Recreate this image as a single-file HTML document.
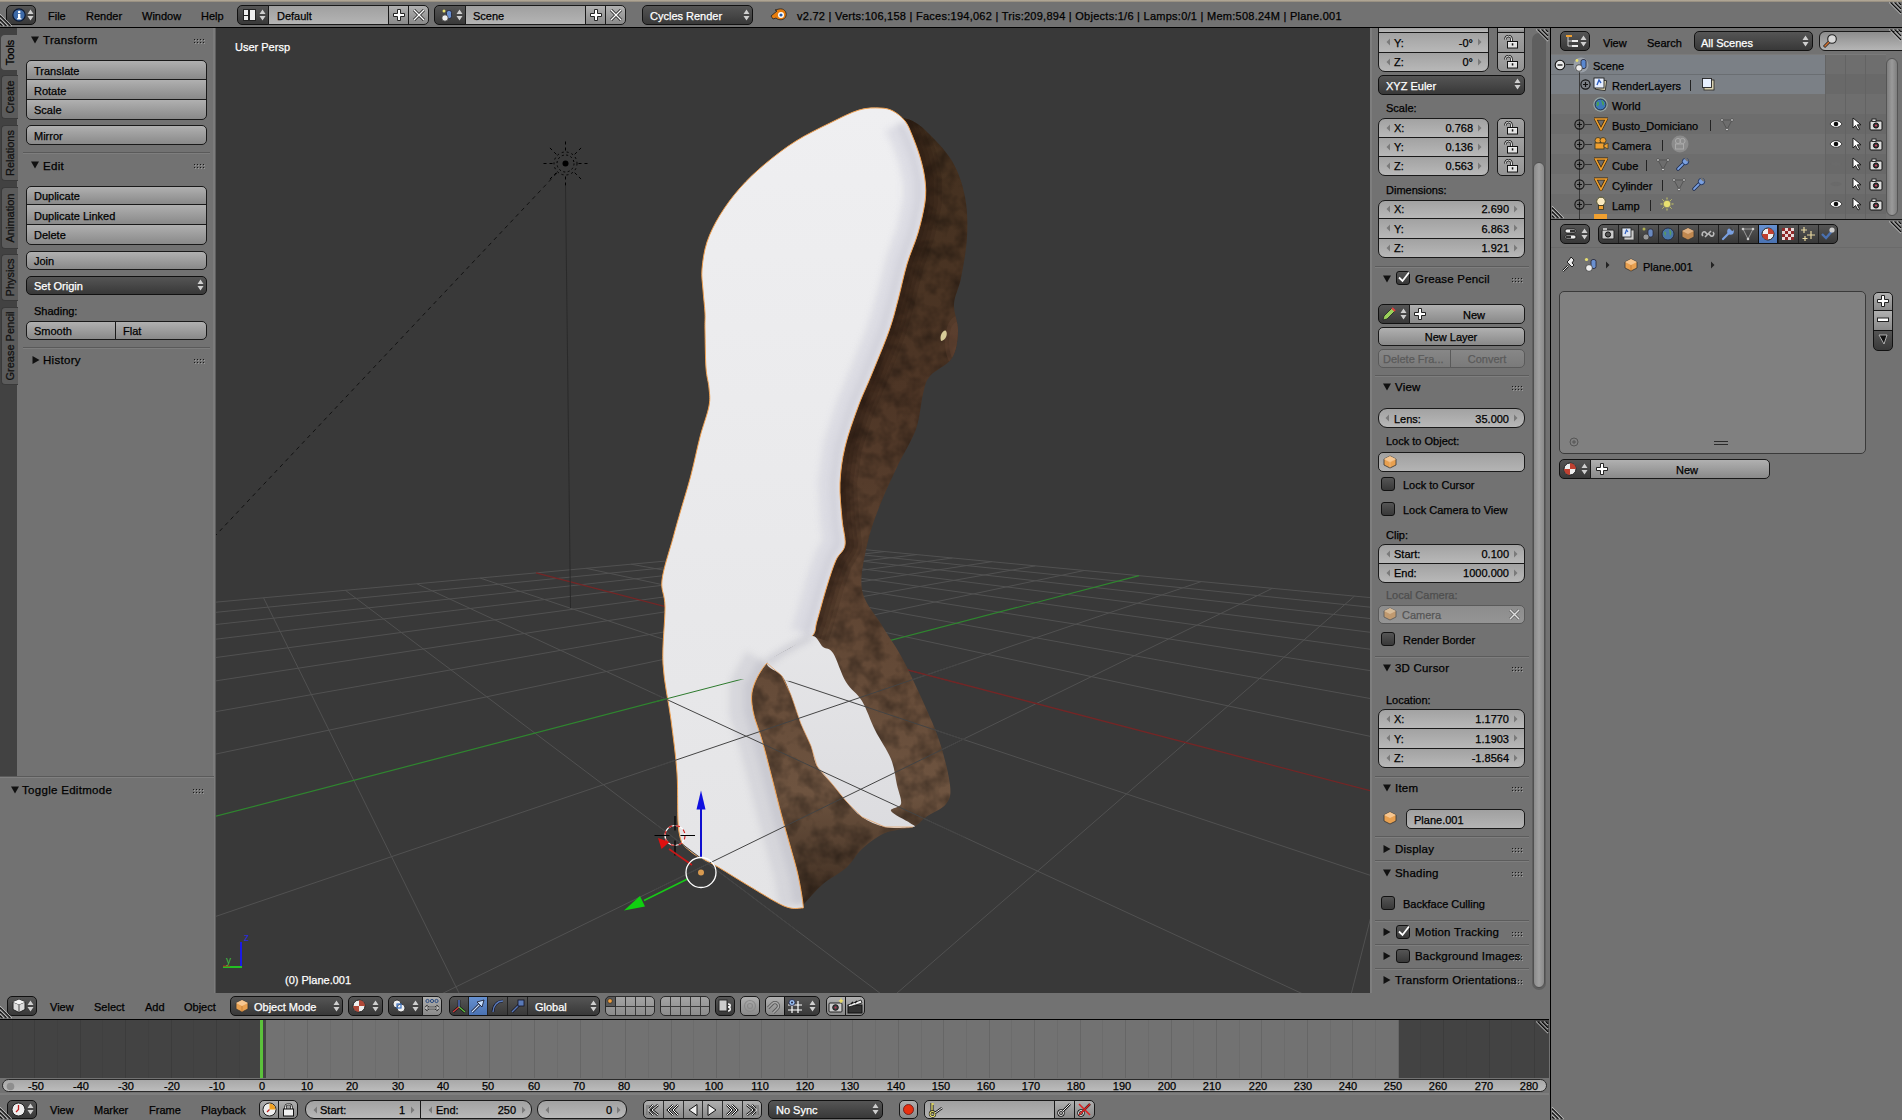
<!DOCTYPE html><html><head><meta charset="utf-8"><style>html,body{margin:0;padding:0;width:1902px;height:1120px;overflow:hidden;background:#727272}div{position:absolute}.t{font-family:"Liberation Sans",sans-serif;font-size:11px;line-height:12px;white-space:pre;-webkit-text-stroke:0.25px currentColor}</style></head><body><div style="left:0px;top:0px;width:1902px;height:27px;background:#727272;"></div><div style="left:0px;top:0px;width:1902px;height:2px;background:linear-gradient(#b9ae9c,#8f877a);"></div><div style="left:0px;top:27px;width:1902px;height:1px;background:#000;"></div><div style="left:6px;top:5px;width:30px;height:20px;box-sizing:border-box;border:1px solid #111;border-radius:5px 5px 5px 5px;background:linear-gradient(#555555,#383838);"></div><svg style="position:absolute;left:12px;top:8px;" width="14" height="14" viewBox="0 0 14 14"><circle cx="7" cy="7" r="6.2" fill="#3d6aa8" stroke="#0c1830" stroke-width="1.2"/><rect x="6" y="6" width="2.4" height="5" fill="#fff"/><rect x="5" y="10.2" width="4.4" height="1.2" fill="#fff"/><circle cx="7.2" cy="4" r="1.3" fill="#fff"/></svg><svg style="position:absolute;left:27px;top:9px;" width="7" height="12" viewBox="0 0 7 12"><path d="M0.5 5 L3.5 0.5 L6.5 5 Z M0.5 7 L3.5 11.5 L6.5 7 Z" fill="#cfcfcf"/></svg><div class="t" style="left:48px;top:10px;color:#000;font-size:11px;">File</div><div class="t" style="left:86px;top:10px;color:#000;font-size:11px;">Render</div><div class="t" style="left:142px;top:10px;color:#000;font-size:11px;">Window</div><div class="t" style="left:201px;top:10px;color:#000;font-size:11px;">Help</div><div style="left:237px;top:5px;width:32px;height:20px;box-sizing:border-box;border:1px solid #111;border-radius:5px 0px 0px 5px;background:linear-gradient(#555555,#383838);"></div><svg style="position:absolute;left:243px;top:9px;" width="13" height="12" viewBox="0 0 13 12"><rect x="0.5" y="0.5" width="5" height="11" fill="#eee" stroke="#222"/><rect x="6.5" y="0.5" width="6" height="11" fill="#eee" stroke="#222"/><rect x="0.5" y="6" width="5" height="1" fill="#222"/></svg><svg style="position:absolute;left:259px;top:9px;" width="7" height="12" viewBox="0 0 7 12"><path d="M0.5 5 L3.5 0.5 L6.5 5 Z M0.5 7 L3.5 11.5 L6.5 7 Z" fill="#cfcfcf"/></svg><div style="left:268px;top:5px;width:121px;height:20px;box-sizing:border-box;border:1px solid #191919;border-radius:0px 0px 0px 0px;background:linear-gradient(#a0a0a0,#b4b4b4);"></div><div class="t" style="left:277px;top:10px;color:#000;font-size:11px;">Default</div><div style="left:388px;top:5px;width:21px;height:20px;box-sizing:border-box;border:1px solid #191919;border-radius:0px 0px 0px 0px;background:linear-gradient(#b0b0b0,#898989);"></div><svg style="position:absolute;left:393px;top:9px;" width="12" height="12" viewBox="0 0 12 12"><path d="M4.5 0.5h3v4h4v3h-4v4h-3v-4h-4v-3h4z" fill="#fff" stroke="#222" stroke-width="1"/></svg><div style="left:408px;top:5px;width:21px;height:20px;box-sizing:border-box;border:1px solid #191919;border-radius:0px 5px 5px 0px;background:linear-gradient(#b0b0b0,#898989);"></div><svg style="position:absolute;left:413px;top:9px;" width="12" height="12" viewBox="0 0 12 12"><path d="M1 1 L11 11 M11 1 L1 11" stroke="#222" stroke-width="3"/><path d="M1 1 L11 11 M11 1 L1 11" stroke="#fff" stroke-width="1.4"/></svg><div style="left:434px;top:5px;width:32px;height:20px;box-sizing:border-box;border:1px solid #111;border-radius:5px 0px 0px 5px;background:linear-gradient(#555555,#383838);"></div><svg style="position:absolute;left:440px;top:8px;" width="14" height="14" viewBox="0 0 14 14"><circle cx="4" cy="3" r="1.5" fill="#e8e070"/><rect x="6.5" y="2.5" width="5" height="8" rx="2" fill="#6a90d0" stroke="#223" stroke-width="0.8"/><circle cx="5" cy="10" r="3.2" fill="#eee" stroke="#333" stroke-width="0.8"/></svg><svg style="position:absolute;left:456px;top:9px;" width="7" height="12" viewBox="0 0 7 12"><path d="M0.5 5 L3.5 0.5 L6.5 5 Z M0.5 7 L3.5 11.5 L6.5 7 Z" fill="#cfcfcf"/></svg><div style="left:465px;top:5px;width:121px;height:20px;box-sizing:border-box;border:1px solid #191919;border-radius:0px 0px 0px 0px;background:linear-gradient(#a0a0a0,#b4b4b4);"></div><div class="t" style="left:473px;top:10px;color:#000;font-size:11px;">Scene</div><div style="left:585px;top:5px;width:21px;height:20px;box-sizing:border-box;border:1px solid #191919;border-radius:0px 0px 0px 0px;background:linear-gradient(#b0b0b0,#898989);"></div><svg style="position:absolute;left:590px;top:9px;" width="12" height="12" viewBox="0 0 12 12"><path d="M4.5 0.5h3v4h4v3h-4v4h-3v-4h-4v-3h4z" fill="#fff" stroke="#222" stroke-width="1"/></svg><div style="left:605px;top:5px;width:21px;height:20px;box-sizing:border-box;border:1px solid #191919;border-radius:0px 5px 5px 0px;background:linear-gradient(#b0b0b0,#898989);"></div><svg style="position:absolute;left:610px;top:9px;" width="12" height="12" viewBox="0 0 12 12"><path d="M1 1 L11 11 M11 1 L1 11" stroke="#222" stroke-width="3"/><path d="M1 1 L11 11 M11 1 L1 11" stroke="#fff" stroke-width="1.4"/></svg><div style="left:642px;top:5px;width:111px;height:20px;box-sizing:border-box;border:1px solid #111;border-radius:5px 5px 5px 5px;background:linear-gradient(#555555,#383838);"></div><div class="t" style="left:650px;top:10px;color:#fff;font-size:11px;">Cycles Render</div><svg style="position:absolute;left:743px;top:9px;" width="7" height="12" viewBox="0 0 7 12"><path d="M0.5 5 L3.5 0.5 L6.5 5 Z M0.5 7 L3.5 11.5 L6.5 7 Z" fill="#cfcfcf"/></svg><svg style="position:absolute;left:770px;top:7px;" width="18" height="14" viewBox="0 0 18 14"><path d="M1 9 L7 4 L5 3 L9 2 C14 1 17 5 16 9 C15 13 9 14 6 11 L3 12 Z" fill="#e87d0d" stroke="#222" stroke-width="0.8"/><circle cx="11" cy="8" r="3" fill="#fff"/><circle cx="11" cy="8" r="1.6" fill="#2a5aa0"/></svg><div class="t" style="left:797px;top:10px;color:#000;font-size:11px;letter-spacing:0.26px">v2.72 | Verts:106,158 | Faces:194,062 | Tris:209,894 | Objects:1/6 | Lamps:0/1 | Mem:508.24M | Plane.001</div><div style="left:0px;top:28px;width:17px;height:749px;background:#424242;"></div><div style="left:17px;top:28px;width:197px;height:749px;background:#727272;"></div><div style="left:213px;top:28px;width:3px;height:965px;background:#7c7c7c;"></div><div style="left:215px;top:28px;width:1px;height:965px;background:#5e5e5e;"></div><div style="left:1px;top:35px;width:17px;height:35px;box-sizing:border-box;border:1px solid #727272;border-radius:4px 0px 0px 4px;background:#727272;border-right:none"></div><div class="t" style="left:2px;top:35px;width:35px;height:16px;line-height:16px;text-align:center;transform-origin:0 0;transform:translate(0px,35px) rotate(-90deg);color:#000">Tools</div><div style="left:1px;top:75px;width:17px;height:44px;box-sizing:border-box;border:1px solid #3a3a3a;border-radius:4px 0px 0px 4px;background:#5b5b5b;border-right:none"></div><div class="t" style="left:2px;top:75px;width:44px;height:16px;line-height:16px;text-align:center;transform-origin:0 0;transform:translate(0px,44px) rotate(-90deg);color:#111">Create</div><div style="left:1px;top:125px;width:17px;height:56px;box-sizing:border-box;border:1px solid #3a3a3a;border-radius:4px 0px 0px 4px;background:#5b5b5b;border-right:none"></div><div class="t" style="left:2px;top:125px;width:56px;height:16px;line-height:16px;text-align:center;transform-origin:0 0;transform:translate(0px,56px) rotate(-90deg);color:#111">Relations</div><div style="left:1px;top:187px;width:17px;height:62px;box-sizing:border-box;border:1px solid #3a3a3a;border-radius:4px 0px 0px 4px;background:#5b5b5b;border-right:none"></div><div class="t" style="left:2px;top:187px;width:62px;height:16px;line-height:16px;text-align:center;transform-origin:0 0;transform:translate(0px,62px) rotate(-90deg);color:#111">Animation</div><div style="left:1px;top:254px;width:17px;height:47px;box-sizing:border-box;border:1px solid #3a3a3a;border-radius:4px 0px 0px 4px;background:#5b5b5b;border-right:none"></div><div class="t" style="left:2px;top:254px;width:47px;height:16px;line-height:16px;text-align:center;transform-origin:0 0;transform:translate(0px,47px) rotate(-90deg);color:#111">Physics</div><div style="left:1px;top:307px;width:17px;height:78px;box-sizing:border-box;border:1px solid #3a3a3a;border-radius:4px 0px 0px 4px;background:#5b5b5b;border-right:none"></div><div class="t" style="left:2px;top:307px;width:78px;height:16px;line-height:16px;text-align:center;transform-origin:0 0;transform:translate(0px,78px) rotate(-90deg);color:#111">Grease Pencil</div><svg style="position:absolute;left:31px;top:36px;" width="9" height="8" viewBox="0 0 9 8"><path d="M0 0.5 L8 0.5 L4 7.5 Z" fill="#111"/></svg><div class="t" style="left:43px;top:34px;color:#000;font-size:11px;font-size:11.5px;letter-spacing:0.3px">Transform</div><svg style="position:absolute;left:194px;top:39px;" width="12" height="6" viewBox="0 0 12 6"><rect x="0" y="0" width="1" height="1" fill="#1a1a1a"/><rect x="1" y="1" width="1" height="1" fill="#9a9a9a"/><rect x="0" y="3" width="1" height="1" fill="#1a1a1a"/><rect x="1" y="4" width="1" height="1" fill="#9a9a9a"/><rect x="3" y="0" width="1" height="1" fill="#1a1a1a"/><rect x="4" y="1" width="1" height="1" fill="#9a9a9a"/><rect x="3" y="3" width="1" height="1" fill="#1a1a1a"/><rect x="4" y="4" width="1" height="1" fill="#9a9a9a"/><rect x="6" y="0" width="1" height="1" fill="#1a1a1a"/><rect x="7" y="1" width="1" height="1" fill="#9a9a9a"/><rect x="6" y="3" width="1" height="1" fill="#1a1a1a"/><rect x="7" y="4" width="1" height="1" fill="#9a9a9a"/><rect x="9" y="0" width="1" height="1" fill="#1a1a1a"/><rect x="10" y="1" width="1" height="1" fill="#9a9a9a"/><rect x="9" y="3" width="1" height="1" fill="#1a1a1a"/><rect x="10" y="4" width="1" height="1" fill="#9a9a9a"/></svg><div style="left:26px;top:60px;width:181px;height:20px;box-sizing:border-box;border:1px solid #191919;border-radius:5px 5px 0px 0px;background:linear-gradient(#b0b0b0,#898989);"></div><div class="t" style="left:34px;top:65px;color:#000;font-size:11px;">Translate</div><div style="left:26px;top:79px;width:181px;height:21px;box-sizing:border-box;border:1px solid #191919;border-radius:0px 0px 0px 0px;background:linear-gradient(#b0b0b0,#898989);"></div><div class="t" style="left:34px;top:85px;color:#000;font-size:11px;">Rotate</div><div style="left:26px;top:99px;width:181px;height:21px;box-sizing:border-box;border:1px solid #191919;border-radius:0px 0px 5px 5px;background:linear-gradient(#b0b0b0,#898989);"></div><div class="t" style="left:34px;top:104px;color:#000;font-size:11px;">Scale</div><div style="left:26px;top:125px;width:181px;height:20px;box-sizing:border-box;border:1px solid #191919;border-radius:5px 5px 5px 5px;background:linear-gradient(#b0b0b0,#898989);"></div><div class="t" style="left:34px;top:130px;color:#000;font-size:11px;">Mirror</div><div style="left:23px;top:152px;width:187px;height:1px;background:#5a5a5a;"></div><div style="left:23px;top:153px;width:187px;height:1px;background:#7e7e7e;"></div><svg style="position:absolute;left:31px;top:161px;" width="9" height="8" viewBox="0 0 9 8"><path d="M0 0.5 L8 0.5 L4 7.5 Z" fill="#111"/></svg><div class="t" style="left:43px;top:160px;color:#000;font-size:11px;font-size:11.5px;letter-spacing:0.3px">Edit</div><svg style="position:absolute;left:194px;top:164px;" width="12" height="6" viewBox="0 0 12 6"><rect x="0" y="0" width="1" height="1" fill="#1a1a1a"/><rect x="1" y="1" width="1" height="1" fill="#9a9a9a"/><rect x="0" y="3" width="1" height="1" fill="#1a1a1a"/><rect x="1" y="4" width="1" height="1" fill="#9a9a9a"/><rect x="3" y="0" width="1" height="1" fill="#1a1a1a"/><rect x="4" y="1" width="1" height="1" fill="#9a9a9a"/><rect x="3" y="3" width="1" height="1" fill="#1a1a1a"/><rect x="4" y="4" width="1" height="1" fill="#9a9a9a"/><rect x="6" y="0" width="1" height="1" fill="#1a1a1a"/><rect x="7" y="1" width="1" height="1" fill="#9a9a9a"/><rect x="6" y="3" width="1" height="1" fill="#1a1a1a"/><rect x="7" y="4" width="1" height="1" fill="#9a9a9a"/><rect x="9" y="0" width="1" height="1" fill="#1a1a1a"/><rect x="10" y="1" width="1" height="1" fill="#9a9a9a"/><rect x="9" y="3" width="1" height="1" fill="#1a1a1a"/><rect x="10" y="4" width="1" height="1" fill="#9a9a9a"/></svg><div style="left:26px;top:186px;width:181px;height:19px;box-sizing:border-box;border:1px solid #191919;border-radius:5px 5px 0px 0px;background:linear-gradient(#b0b0b0,#898989);"></div><div class="t" style="left:34px;top:190px;color:#000;font-size:11px;">Duplicate</div><div style="left:26px;top:204px;width:181px;height:21px;box-sizing:border-box;border:1px solid #191919;border-radius:0px 0px 0px 0px;background:linear-gradient(#b0b0b0,#898989);"></div><div class="t" style="left:34px;top:210px;color:#000;font-size:11px;">Duplicate Linked</div><div style="left:26px;top:224px;width:181px;height:21px;box-sizing:border-box;border:1px solid #191919;border-radius:0px 0px 5px 5px;background:linear-gradient(#b0b0b0,#898989);"></div><div class="t" style="left:34px;top:229px;color:#000;font-size:11px;">Delete</div><div style="left:26px;top:251px;width:181px;height:19px;box-sizing:border-box;border:1px solid #191919;border-radius:5px 5px 5px 5px;background:linear-gradient(#b0b0b0,#898989);"></div><div class="t" style="left:34px;top:255px;color:#000;font-size:11px;">Join</div><div style="left:26px;top:276px;width:181px;height:19px;box-sizing:border-box;border:1px solid #111;border-radius:5px 5px 5px 5px;background:linear-gradient(#555555,#383838);"></div><div class="t" style="left:34px;top:280px;color:#fff;font-size:11px;">Set Origin</div><svg style="position:absolute;left:197px;top:279px;" width="7" height="12" viewBox="0 0 7 12"><path d="M0.5 5 L3.5 0.5 L6.5 5 Z M0.5 7 L3.5 11.5 L6.5 7 Z" fill="#d0d0d0"/></svg><div class="t" style="left:34px;top:305px;color:#000;font-size:11px;">Shading:</div><div style="left:26px;top:321px;width:90px;height:19px;box-sizing:border-box;border:1px solid #191919;border-radius:5px 0px 0px 5px;background:linear-gradient(#b0b0b0,#898989);"></div><div class="t" style="left:34px;top:325px;color:#000;font-size:11px;">Smooth</div><div style="left:115px;top:321px;width:92px;height:19px;box-sizing:border-box;border:1px solid #191919;border-radius:0px 5px 5px 0px;background:linear-gradient(#b0b0b0,#898989);"></div><div class="t" style="left:123px;top:325px;color:#000;font-size:11px;">Flat</div><div style="left:23px;top:347px;width:187px;height:1px;background:#5a5a5a;"></div><div style="left:23px;top:348px;width:187px;height:1px;background:#7e7e7e;"></div><svg style="position:absolute;left:32px;top:356px;" width="8" height="9" viewBox="0 0 8 9"><path d="M0.5 0 L7.5 4 L0.5 8 Z" fill="#111"/></svg><div class="t" style="left:43px;top:354px;color:#000;font-size:11px;font-size:11.5px;letter-spacing:0.3px">History</div><svg style="position:absolute;left:194px;top:359px;" width="12" height="6" viewBox="0 0 12 6"><rect x="0" y="0" width="1" height="1" fill="#1a1a1a"/><rect x="1" y="1" width="1" height="1" fill="#9a9a9a"/><rect x="0" y="3" width="1" height="1" fill="#1a1a1a"/><rect x="1" y="4" width="1" height="1" fill="#9a9a9a"/><rect x="3" y="0" width="1" height="1" fill="#1a1a1a"/><rect x="4" y="1" width="1" height="1" fill="#9a9a9a"/><rect x="3" y="3" width="1" height="1" fill="#1a1a1a"/><rect x="4" y="4" width="1" height="1" fill="#9a9a9a"/><rect x="6" y="0" width="1" height="1" fill="#1a1a1a"/><rect x="7" y="1" width="1" height="1" fill="#9a9a9a"/><rect x="6" y="3" width="1" height="1" fill="#1a1a1a"/><rect x="7" y="4" width="1" height="1" fill="#9a9a9a"/><rect x="9" y="0" width="1" height="1" fill="#1a1a1a"/><rect x="10" y="1" width="1" height="1" fill="#9a9a9a"/><rect x="9" y="3" width="1" height="1" fill="#1a1a1a"/><rect x="10" y="4" width="1" height="1" fill="#9a9a9a"/></svg><div style="left:0px;top:776px;width:214px;height:1px;background:#5a5a5a;"></div><div style="left:0px;top:777px;width:214px;height:216px;background:#727272;"></div><div style="left:0px;top:777px;width:214px;height:1px;background:#808080;"></div><svg style="position:absolute;left:11px;top:786px;" width="9" height="8" viewBox="0 0 9 8"><path d="M0 0.5 L8 0.5 L4 7.5 Z" fill="#111"/></svg><div class="t" style="left:22px;top:784px;color:#000;font-size:11px;font-size:11.5px;letter-spacing:0.3px">Toggle Editmode</div><svg style="position:absolute;left:193px;top:789px;" width="12" height="6" viewBox="0 0 12 6"><rect x="0" y="0" width="1" height="1" fill="#1a1a1a"/><rect x="1" y="1" width="1" height="1" fill="#9a9a9a"/><rect x="0" y="3" width="1" height="1" fill="#1a1a1a"/><rect x="1" y="4" width="1" height="1" fill="#9a9a9a"/><rect x="3" y="0" width="1" height="1" fill="#1a1a1a"/><rect x="4" y="1" width="1" height="1" fill="#9a9a9a"/><rect x="3" y="3" width="1" height="1" fill="#1a1a1a"/><rect x="4" y="4" width="1" height="1" fill="#9a9a9a"/><rect x="6" y="0" width="1" height="1" fill="#1a1a1a"/><rect x="7" y="1" width="1" height="1" fill="#9a9a9a"/><rect x="6" y="3" width="1" height="1" fill="#1a1a1a"/><rect x="7" y="4" width="1" height="1" fill="#9a9a9a"/><rect x="9" y="0" width="1" height="1" fill="#1a1a1a"/><rect x="10" y="1" width="1" height="1" fill="#9a9a9a"/><rect x="9" y="3" width="1" height="1" fill="#1a1a1a"/><rect x="10" y="4" width="1" height="1" fill="#9a9a9a"/></svg><div style="left:216px;top:28px;width:1154px;height:965px;background:#393939;"></div><svg style="position:absolute;left:216px;top:28px" width="1154" height="965" viewBox="0 0 1154 965"><line x1="1859.7" y1="636.5" x2="28938.4" y2="8734.6" stroke="#515151" stroke-width="1"/><line x1="1859.7" y1="636.5" x2="612.2" y2="518.2" stroke="#515151" stroke-width="1"/><line x1="1650.9" y1="616.7" x2="21490.2" y2="8739.6" stroke="#515151" stroke-width="1"/><line x1="1938.1" y1="660.0" x2="586.0" y2="520.6" stroke="#515151" stroke-width="1"/><line x1="1484.2" y1="600.9" x2="14041.9" y2="8744.7" stroke="#515151" stroke-width="1"/><line x1="2040.5" y1="690.6" x2="557.5" y2="523.2" stroke="#515151" stroke-width="1"/><line x1="1347.9" y1="588.0" x2="6593.7" y2="8749.8" stroke="#515151" stroke-width="1"/><line x1="2179.4" y1="732.1" x2="526.6" y2="526.0" stroke="#515151" stroke-width="1"/><line x1="1234.5" y1="577.2" x2="-854.6" y2="8754.9" stroke="#515151" stroke-width="1"/><line x1="2379.1" y1="791.9" x2="492.8" y2="529.1" stroke="#515151" stroke-width="1"/><line x1="1138.5" y1="568.1" x2="-8302.9" y2="8760.0" stroke="#515151" stroke-width="1"/><line x1="2690.3" y1="884.9" x2="455.8" y2="532.5" stroke="#515151" stroke-width="1"/><line x1="1056.4" y1="560.3" x2="-15751.1" y2="8765.1" stroke="#515151" stroke-width="1"/><line x1="3242.5" y1="1050.1" x2="415.1" y2="536.2" stroke="#515151" stroke-width="1"/><line x1="985.2" y1="553.6" x2="-23199.4" y2="8770.2" stroke="#515151" stroke-width="1"/><line x1="4493.3" y1="1424.1" x2="370.1" y2="540.3" stroke="#515151" stroke-width="1"/><line x1="868.1" y1="542.5" x2="-1886.8" y2="1124.9" stroke="#515151" stroke-width="1"/><line x1="24779.3" y1="8737.4" x2="264.0" y2="550.0" stroke="#515151" stroke-width="1"/><line x1="819.3" y1="537.9" x2="-1286.8" y2="912.5" stroke="#515151" stroke-width="1"/><line x1="17884.7" y1="8742.1" x2="200.9" y2="555.8" stroke="#515151" stroke-width="1"/><line x1="775.7" y1="533.7" x2="-977.1" y2="802.9" stroke="#515151" stroke-width="1"/><line x1="10990.0" y1="8746.8" x2="129.4" y2="562.3" stroke="#515151" stroke-width="1"/><line x1="736.4" y1="530.0" x2="-788.1" y2="736.0" stroke="#515151" stroke-width="1"/><line x1="4095.4" y1="8751.6" x2="47.5" y2="569.8" stroke="#515151" stroke-width="1"/><line x1="700.9" y1="526.6" x2="-660.8" y2="690.9" stroke="#515151" stroke-width="1"/><line x1="-2799.2" y1="8756.3" x2="-47.1" y2="578.4" stroke="#515151" stroke-width="1"/><line x1="668.7" y1="523.6" x2="-569.1" y2="658.5" stroke="#515151" stroke-width="1"/><line x1="-9693.9" y1="8761.0" x2="-157.7" y2="588.5" stroke="#515151" stroke-width="1"/><line x1="639.2" y1="520.8" x2="-500.0" y2="634.0" stroke="#515151" stroke-width="1"/><line x1="-16588.5" y1="8765.7" x2="-288.6" y2="600.5" stroke="#515151" stroke-width="1"/><line x1="612.2" y1="518.2" x2="-446.0" y2="614.9" stroke="#515151" stroke-width="1"/><line x1="-23483.1" y1="8770.4" x2="-446.0" y2="614.9" stroke="#515151" stroke-width="1"/><line x1="10047.9" y1="3085.3" x2="320.0" y2="544.9" stroke="#742626" stroke-width="1.3"/><line x1="923.0" y1="547.7" x2="-3546.4" y2="1712.4" stroke="#2f862f" stroke-width="1.2"/><line x1="349.5" y1="158" x2="354.5" y2="580" stroke="#2a2a2a" stroke-width="1"/><line x1="341" y1="145" x2="0" y2="507" stroke="#111" stroke-width="1" stroke-dasharray="4 4"/><circle cx="349.5" cy="135.5" r="3" fill="#000"/><circle cx="349.5" cy="135.5" r="8.5" fill="none" stroke="#000" stroke-width="1" stroke-dasharray="2 2.5"/><circle cx="349.5" cy="135.5" r="11.5" fill="none" stroke="#000" stroke-width="1" stroke-dasharray="2 3"/><line x1="362.5" y1="135.5" x2="372.5" y2="135.5" stroke="#000" stroke-width="1" stroke-dasharray="3 3"/><line x1="358.7" y1="144.7" x2="365.8" y2="151.8" stroke="#000" stroke-width="1" stroke-dasharray="3 3"/><line x1="349.5" y1="148.5" x2="349.5" y2="158.5" stroke="#000" stroke-width="1" stroke-dasharray="3 3"/><line x1="340.3" y1="144.7" x2="333.2" y2="151.8" stroke="#000" stroke-width="1" stroke-dasharray="3 3"/><line x1="336.5" y1="135.5" x2="326.5" y2="135.5" stroke="#000" stroke-width="1" stroke-dasharray="3 3"/><line x1="340.3" y1="126.3" x2="333.2" y2="119.2" stroke="#000" stroke-width="1" stroke-dasharray="3 3"/><line x1="349.5" y1="122.5" x2="349.5" y2="112.5" stroke="#000" stroke-width="1" stroke-dasharray="3 3"/><line x1="358.7" y1="126.3" x2="365.8" y2="119.2" stroke="#000" stroke-width="1" stroke-dasharray="3 3"/><defs><linearGradient id="gw" gradientUnits="userSpaceOnUse" x1="0" y1="80" x2="0" y2="880"><stop offset="0" stop-color="#efeff1"/><stop offset="1" stop-color="#e4e4e6"/></linearGradient><linearGradient id="gi" gradientUnits="userSpaceOnUse" x1="0" y1="600" x2="0" y2="880"><stop offset="0" stop-color="#e6e6e8"/><stop offset="1" stop-color="#d8d8dc"/></linearGradient><linearGradient id="gb" x1="0" y1="0" x2="0" y2="1"><stop offset="0" stop-color="#43301f"/><stop offset="0.35" stop-color="#4e3626"/><stop offset="0.6" stop-color="#5e4432"/><stop offset="0.85" stop-color="#6e5440"/><stop offset="1" stop-color="#3a2a1e"/></linearGradient><filter id="bl" x="-0.2" y="-0.2" width="1.4" height="1.4"><feGaussianBlur stdDeviation="5"/></filter><filter id="bl2" x="-0.2" y="-0.2" width="1.4" height="1.4"><feGaussianBlur stdDeviation="3"/></filter><filter id="tex" x="0" y="0" width="1" height="1"><feTurbulence type="fractalNoise" baseFrequency="0.06" numOctaves="3" seed="3"/><feColorMatrix type="matrix" values="0 0 0 0 0  0 0 0 0 0  0 0 0 0 0  0 0 0 -1.6 1.0"/><feComposite in2="SourceGraphic" operator="in"/></filter><clipPath id="cw"><path d="M664.0,80.0 C669.7,80.2 672.8,80.8 677.0,83.0 C681.2,85.2 685.8,89.0 689.0,93.0 C692.2,97.0 693.5,101.0 696.0,107.0 C698.5,113.0 701.8,121.5 704.0,129.0 C706.2,136.5 708.2,144.5 709.0,152.0 C709.8,159.5 710.2,165.2 709.0,174.0 C707.8,182.8 705.0,194.7 702.0,205.0 C699.0,215.3 694.3,224.8 691.0,236.0 C687.7,247.2 685.0,260.8 682.0,272.0 C679.0,283.2 677.5,290.3 673.0,303.0 C668.5,315.7 660.2,335.3 655.0,348.0 C649.8,360.7 646.3,367.2 642.0,379.0 C637.7,390.8 632.0,406.3 629.0,419.0 C626.0,431.7 624.5,443.0 624.0,455.0 C623.5,467.0 625.2,480.7 626.0,491.0 C626.8,501.3 630.0,510.2 629.0,517.0 C628.0,523.8 623.0,525.2 620.0,532.0 C617.0,538.8 614.2,547.8 611.0,558.0 C607.8,568.2 603.5,584.7 601.0,593.0 C598.5,601.3 600.5,603.5 596.0,608.0 C591.5,612.5 581.5,615.5 574.0,620.0 C566.5,624.5 557.2,628.3 551.0,635.0 C544.8,641.7 539.3,652.0 537.0,660.0 C534.7,668.0 535.5,674.3 537.0,683.0 C538.5,691.7 542.8,700.8 546.0,712.0 C549.2,723.2 552.7,737.2 556.0,750.0 C559.3,762.8 562.8,777.2 566.0,789.0 C569.2,800.8 572.3,811.3 575.0,821.0 C577.7,830.7 580.0,837.8 582.0,847.0 C584.0,856.2 586.5,870.5 587.0,876.0 C587.5,881.5 588.2,879.7 585.0,880.0 C581.8,880.3 576.7,881.7 568.0,878.0 C559.3,874.3 544.0,864.5 533.0,858.0 C522.0,851.5 511.8,844.8 502.0,839.0 C492.2,833.2 480.5,828.8 474.0,823.0 C467.5,817.2 465.2,817.0 463.0,804.0 C460.8,791.0 462.3,763.7 461.0,745.0 C459.7,726.3 457.3,710.2 455.0,692.0 C452.7,673.8 448.0,654.8 447.0,636.0 C446.0,617.2 449.2,593.0 449.0,579.0 C448.8,565.0 444.7,563.5 446.0,552.0 C447.3,540.5 454.0,521.2 457.0,510.0 C460.0,498.8 461.0,495.5 464.0,485.0 C467.0,474.5 471.7,459.7 475.0,447.0 C478.3,434.3 481.0,420.5 484.0,409.0 C487.0,397.5 491.5,386.2 493.0,378.0 C494.5,369.8 493.5,366.3 493.0,360.0 C492.5,353.7 490.7,349.7 490.0,340.0 C489.3,330.3 489.2,311.2 489.0,302.0 C488.8,292.8 489.3,291.7 489.0,285.0 C488.7,278.3 487.5,269.3 487.0,262.0 C486.5,254.7 485.3,249.0 486.0,241.0 C486.7,233.0 488.0,223.0 491.0,214.0 C494.0,205.0 498.5,196.0 504.0,187.0 C509.5,178.0 516.5,168.5 524.0,160.0 C531.5,151.5 539.7,143.8 549.0,136.0 C558.3,128.2 569.2,119.8 580.0,113.0 C590.8,106.2 603.5,100.2 614.0,95.0 C624.5,89.8 634.7,84.5 643.0,82.0 C651.3,79.5 658.3,79.8 664.0,80.0 Z"/></clipPath><clipPath id="cb"><path d="M691.0,91.0 C696.0,92.5 701.5,95.0 709.0,102.0 C716.5,109.0 729.3,121.8 736.0,133.0 C742.7,144.2 746.5,156.3 749.0,169.0 C751.5,181.7 751.7,195.5 751.0,209.0 C750.3,222.5 747.2,238.8 745.0,250.0 C742.8,261.2 738.5,267.2 738.0,276.0 C737.5,284.8 742.3,294.0 742.0,303.0 C741.7,312.0 740.7,322.5 736.0,330.0 C731.3,337.5 718.8,342.0 714.0,348.0 C709.2,354.0 709.3,357.2 707.0,366.0 C704.7,374.8 704.2,389.2 700.0,401.0 C695.8,412.8 688.0,424.3 682.0,437.0 C676.0,449.7 669.2,463.7 664.0,477.0 C658.8,490.3 654.0,502.8 651.0,517.0 C648.0,531.2 643.7,548.8 646.0,562.0 C648.3,575.2 658.5,585.0 665.0,596.0 C671.5,607.0 678.5,616.2 685.0,628.0 C691.5,639.8 697.7,653.0 704.0,667.0 C710.3,681.0 718.0,697.0 723.0,712.0 C728.0,727.0 732.8,746.3 734.0,757.0 C735.2,767.7 734.0,770.7 730.0,776.0 C726.0,781.3 715.5,785.2 710.0,789.0 C704.5,792.8 703.8,796.3 697.0,799.0 C690.2,801.7 677.5,801.3 669.0,805.0 C660.5,808.7 652.5,815.2 646.0,821.0 C639.5,826.8 636.5,834.2 630.0,840.0 C623.5,845.8 614.0,850.0 607.0,856.0 C600.0,862.0 591.7,872.0 588.0,876.0 C584.3,880.0 586.2,884.8 585.0,880.0 C583.8,875.2 582.7,856.8 581.0,847.0 C579.3,837.2 577.5,830.7 575.0,821.0 C572.5,811.3 569.2,800.8 566.0,789.0 C562.8,777.2 559.3,762.8 556.0,750.0 C552.7,737.2 549.2,723.2 546.0,712.0 C542.8,700.8 538.5,691.7 537.0,683.0 C535.5,674.3 534.7,668.0 537.0,660.0 C539.3,652.0 543.2,643.7 551.0,635.0 C558.8,626.3 573.5,627.7 584.0,608.0 C594.5,588.3 609.3,542.5 614.0,517.0 C618.7,491.5 609.5,478.0 612.0,455.0 C614.5,432.0 621.0,404.3 629.0,379.0 C637.0,353.7 650.0,332.0 660.0,303.0 C670.0,274.0 683.7,234.0 689.0,205.0 C694.3,176.0 693.7,147.7 692.0,129.0 C690.3,110.3 679.2,99.3 679.0,93.0 C678.8,86.7 686.0,89.5 691.0,91.0 Z"/></clipPath></defs><path d="M691.0,91.0 C696.0,92.5 701.5,95.0 709.0,102.0 C716.5,109.0 729.3,121.8 736.0,133.0 C742.7,144.2 746.5,156.3 749.0,169.0 C751.5,181.7 751.7,195.5 751.0,209.0 C750.3,222.5 747.2,238.8 745.0,250.0 C742.8,261.2 738.5,267.2 738.0,276.0 C737.5,284.8 742.3,294.0 742.0,303.0 C741.7,312.0 740.7,322.5 736.0,330.0 C731.3,337.5 718.8,342.0 714.0,348.0 C709.2,354.0 709.3,357.2 707.0,366.0 C704.7,374.8 704.2,389.2 700.0,401.0 C695.8,412.8 688.0,424.3 682.0,437.0 C676.0,449.7 669.2,463.7 664.0,477.0 C658.8,490.3 654.0,502.8 651.0,517.0 C648.0,531.2 643.7,548.8 646.0,562.0 C648.3,575.2 658.5,585.0 665.0,596.0 C671.5,607.0 678.5,616.2 685.0,628.0 C691.5,639.8 697.7,653.0 704.0,667.0 C710.3,681.0 718.0,697.0 723.0,712.0 C728.0,727.0 732.8,746.3 734.0,757.0 C735.2,767.7 734.0,770.7 730.0,776.0 C726.0,781.3 715.5,785.2 710.0,789.0 C704.5,792.8 703.8,796.3 697.0,799.0 C690.2,801.7 677.5,801.3 669.0,805.0 C660.5,808.7 652.5,815.2 646.0,821.0 C639.5,826.8 636.5,834.2 630.0,840.0 C623.5,845.8 614.0,850.0 607.0,856.0 C600.0,862.0 591.7,872.0 588.0,876.0 C584.3,880.0 586.2,884.8 585.0,880.0 C583.8,875.2 582.7,856.8 581.0,847.0 C579.3,837.2 577.5,830.7 575.0,821.0 C572.5,811.3 569.2,800.8 566.0,789.0 C562.8,777.2 559.3,762.8 556.0,750.0 C552.7,737.2 549.2,723.2 546.0,712.0 C542.8,700.8 538.5,691.7 537.0,683.0 C535.5,674.3 534.7,668.0 537.0,660.0 C539.3,652.0 543.2,643.7 551.0,635.0 C558.8,626.3 573.5,627.7 584.0,608.0 C594.5,588.3 609.3,542.5 614.0,517.0 C618.7,491.5 609.5,478.0 612.0,455.0 C614.5,432.0 621.0,404.3 629.0,379.0 C637.0,353.7 650.0,332.0 660.0,303.0 C670.0,274.0 683.7,234.0 689.0,205.0 C694.3,176.0 693.7,147.7 692.0,129.0 C690.3,110.3 679.2,99.3 679.0,93.0 C678.8,86.7 686.0,89.5 691.0,91.0 Z" fill="url(#gb)"/><g clip-path="url(#cb)" opacity="0.45"><rect x="524" y="72" width="240" height="820" fill="#000" filter="url(#tex)"/></g><g clip-path="url(#cb)"><path d="M689,93 L696,107 L704,129 L709,152 L709,174 L702,205 L691,236 L682,272 L673,303 L655,348 L642,379 L629,419 L624,455 L626,491 L629,517 L620,532 L611,558 L601,593 L596,608" fill="none" stroke="#22160e" stroke-width="34" opacity="0.14" stroke-linejoin="round"/><path d="M689,93 L696,107 L704,129 L709,152 L709,174 L702,205 L691,236 L682,272 L673,303 L655,348 L642,379 L629,419 L624,455 L626,491 L629,517 L620,532 L611,558 L601,593 L596,608" fill="none" stroke="#22160e" stroke-width="26" opacity="0.14" stroke-linejoin="round"/><path d="M689,93 L696,107 L704,129 L709,152 L709,174 L702,205 L691,236 L682,272 L673,303 L655,348 L642,379 L629,419 L624,455 L626,491 L629,517 L620,532 L611,558 L601,593 L596,608" fill="none" stroke="#22160e" stroke-width="18" opacity="0.14" stroke-linejoin="round"/><path d="M689,93 L696,107 L704,129 L709,152 L709,174 L702,205 L691,236 L682,272 L673,303 L655,348 L642,379 L629,419 L624,455 L626,491 L629,517 L620,532 L611,558 L601,593 L596,608" fill="none" stroke="#22160e" stroke-width="10" opacity="0.14" stroke-linejoin="round"/><ellipse cx="741" cy="314" rx="12" ry="26" fill="#6a4a38" opacity="0.3"/><ellipse cx="741" cy="314" rx="8" ry="20" fill="#6a4a38" opacity="0.3"/></g><path d="M551.0,635.0 C549.7,639.7 562.0,642.7 566.0,648.0 C570.0,653.3 571.8,659.0 575.0,667.0 C578.2,675.0 581.7,687.5 585.0,696.0 C588.3,704.5 592.3,711.0 595.0,718.0 C597.7,725.0 597.3,731.5 601.0,738.0 C604.7,744.5 612.2,751.2 617.0,757.0 C621.8,762.8 625.2,767.7 630.0,773.0 C634.8,778.3 639.5,784.7 646.0,789.0 C652.5,793.3 660.5,797.3 669.0,799.0 C677.5,800.7 692.8,799.7 697.0,799.0 C701.2,798.3 697.7,797.7 694.0,795.0 C690.3,792.3 676.5,786.2 675.0,783.0 C673.5,779.8 684.0,780.3 685.0,776.0 C686.0,771.7 682.7,764.5 681.0,757.0 C679.3,749.5 678.7,740.2 675.0,731.0 C671.3,721.8 663.8,711.7 659.0,702.0 C654.2,692.3 650.8,681.0 646.0,673.0 C641.2,665.0 634.8,662.0 630.0,654.0 C625.2,646.0 620.8,630.8 617.0,625.0 C613.2,619.2 610.5,621.8 607.0,619.0 C603.5,616.2 601.5,607.8 596.0,608.0 C590.5,608.2 581.5,615.5 574.0,620.0 C566.5,624.5 552.3,630.3 551.0,635.0 Z" fill="url(#gi)"/><path d="M664.0,80.0 C669.7,80.2 672.8,80.8 677.0,83.0 C681.2,85.2 685.8,89.0 689.0,93.0 C692.2,97.0 693.5,101.0 696.0,107.0 C698.5,113.0 701.8,121.5 704.0,129.0 C706.2,136.5 708.2,144.5 709.0,152.0 C709.8,159.5 710.2,165.2 709.0,174.0 C707.8,182.8 705.0,194.7 702.0,205.0 C699.0,215.3 694.3,224.8 691.0,236.0 C687.7,247.2 685.0,260.8 682.0,272.0 C679.0,283.2 677.5,290.3 673.0,303.0 C668.5,315.7 660.2,335.3 655.0,348.0 C649.8,360.7 646.3,367.2 642.0,379.0 C637.7,390.8 632.0,406.3 629.0,419.0 C626.0,431.7 624.5,443.0 624.0,455.0 C623.5,467.0 625.2,480.7 626.0,491.0 C626.8,501.3 630.0,510.2 629.0,517.0 C628.0,523.8 623.0,525.2 620.0,532.0 C617.0,538.8 614.2,547.8 611.0,558.0 C607.8,568.2 603.5,584.7 601.0,593.0 C598.5,601.3 600.5,603.5 596.0,608.0 C591.5,612.5 581.5,615.5 574.0,620.0 C566.5,624.5 557.2,628.3 551.0,635.0 C544.8,641.7 539.3,652.0 537.0,660.0 C534.7,668.0 535.5,674.3 537.0,683.0 C538.5,691.7 542.8,700.8 546.0,712.0 C549.2,723.2 552.7,737.2 556.0,750.0 C559.3,762.8 562.8,777.2 566.0,789.0 C569.2,800.8 572.3,811.3 575.0,821.0 C577.7,830.7 580.0,837.8 582.0,847.0 C584.0,856.2 586.5,870.5 587.0,876.0 C587.5,881.5 588.2,879.7 585.0,880.0 C581.8,880.3 576.7,881.7 568.0,878.0 C559.3,874.3 544.0,864.5 533.0,858.0 C522.0,851.5 511.8,844.8 502.0,839.0 C492.2,833.2 480.5,828.8 474.0,823.0 C467.5,817.2 465.2,817.0 463.0,804.0 C460.8,791.0 462.3,763.7 461.0,745.0 C459.7,726.3 457.3,710.2 455.0,692.0 C452.7,673.8 448.0,654.8 447.0,636.0 C446.0,617.2 449.2,593.0 449.0,579.0 C448.8,565.0 444.7,563.5 446.0,552.0 C447.3,540.5 454.0,521.2 457.0,510.0 C460.0,498.8 461.0,495.5 464.0,485.0 C467.0,474.5 471.7,459.7 475.0,447.0 C478.3,434.3 481.0,420.5 484.0,409.0 C487.0,397.5 491.5,386.2 493.0,378.0 C494.5,369.8 493.5,366.3 493.0,360.0 C492.5,353.7 490.7,349.7 490.0,340.0 C489.3,330.3 489.2,311.2 489.0,302.0 C488.8,292.8 489.3,291.7 489.0,285.0 C488.7,278.3 487.5,269.3 487.0,262.0 C486.5,254.7 485.3,249.0 486.0,241.0 C486.7,233.0 488.0,223.0 491.0,214.0 C494.0,205.0 498.5,196.0 504.0,187.0 C509.5,178.0 516.5,168.5 524.0,160.0 C531.5,151.5 539.7,143.8 549.0,136.0 C558.3,128.2 569.2,119.8 580.0,113.0 C590.8,106.2 603.5,100.2 614.0,95.0 C624.5,89.8 634.7,84.5 643.0,82.0 C651.3,79.5 658.3,79.8 664.0,80.0 Z" fill="url(#gw)"/><g clip-path="url(#cw)"><g filter="url(#bl2)"><path d="M689,93 L696,107 L704,129 L709,152 L709,174 L702,205 L691,236 L682,272 L673,303 L655,348 L642,379 L629,419 L624,455 L626,491 L629,517 L620,532 L611,558 L601,593 L596,608" fill="none" stroke="#d0d0da" stroke-width="44" opacity="0.55" stroke-linejoin="round"/><path d="M689,93 L696,107 L704,129 L709,152 L709,174 L702,205 L691,236 L682,272 L673,303 L655,348 L642,379 L629,419 L624,455 L626,491 L629,517 L620,532 L611,558 L601,593 L596,608" fill="none" stroke="#c8c8d2" stroke-width="20" opacity="0.5" stroke-linejoin="round"/><path d="M689,93 L696,107 L704,129 L709,152 L709,174 L702,205 L691,236 L682,272 L673,303 L655,348 L642,379 L629,419 L624,455 L626,491 L629,517 L620,532 L611,558 L601,593 L596,608" fill="none" stroke="#f4f4f8" stroke-width="3" opacity="0.8" stroke-linejoin="round"/><path d="M551,635 L537,660 L537,683 L546,712 L556,750 L566,789 L575,821 L582,847 L587,876" fill="none" stroke="#c8c8d0" stroke-width="48" opacity="0.5" stroke-linejoin="round"/><path d="M551,635 L537,660 L537,683 L546,712 L556,750 L566,789 L575,821 L582,847 L587,876" fill="none" stroke="#c0c0c8" stroke-width="18" opacity="0.55" stroke-linejoin="round"/></g></g><path d="M551.0,635.0 C544.8,641.7 539.3,652.0 537.0,660.0 C534.7,668.0 535.5,674.3 537.0,683.0 C538.5,691.7 542.8,700.8 546.0,712.0 C549.2,723.2 552.7,737.2 556.0,750.0 C559.3,762.8 562.8,777.2 566.0,789.0 C569.2,800.8 572.3,811.3 575.0,821.0 C577.7,830.7 580.0,837.8 582.0,847.0 C584.0,856.2 586.5,870.5 587.0,876.0 C587.5,881.5 588.2,879.7 585.0,880.0 C581.8,880.3 576.7,881.7 568.0,878.0 C559.3,874.3 544.0,864.5 533.0,858.0 C522.0,851.5 511.8,844.8 502.0,839.0 C492.2,833.2 480.5,828.8 474.0,823.0 C467.5,817.2 465.2,817.0 463.0,804.0 C460.8,791.0 462.3,763.7 461.0,745.0 C459.7,726.3 457.3,710.2 455.0,692.0 C452.7,673.8 448.0,654.8 447.0,636.0 C446.0,617.2 449.2,593.0 449.0,579.0 C448.8,565.0 444.7,563.5 446.0,552.0 C447.3,540.5 454.0,521.2 457.0,510.0 C460.0,498.8 461.0,495.5 464.0,485.0 C467.0,474.5 471.7,459.7 475.0,447.0 C478.3,434.3 481.0,420.5 484.0,409.0 C487.0,397.5 491.5,386.2 493.0,378.0 C494.5,369.8 493.5,366.3 493.0,360.0 C492.5,353.7 490.7,349.7 490.0,340.0 C489.3,330.3 489.2,311.2 489.0,302.0 C488.8,292.8 489.3,291.7 489.0,285.0 C488.7,278.3 487.5,269.3 487.0,262.0 C486.5,254.7 485.3,249.0 486.0,241.0 C486.7,233.0 488.0,223.0 491.0,214.0 C494.0,205.0 498.5,196.0 504.0,187.0 C509.5,178.0 516.5,168.5 524.0,160.0 C531.5,151.5 539.7,143.8 549.0,136.0 C558.3,128.2 569.2,119.8 580.0,113.0 C590.8,106.2 603.5,100.2 614.0,95.0 C624.5,89.8 634.7,84.5 643.0,82.0 C651.3,79.5 658.3,79.8 664.0,80.0 C669.7,80.2 672.8,80.8 677.0,83.0 C681.2,85.2 685.8,89.0 689.0,93.0 C692.2,97.0 693.5,101.0 696.0,107.0 C698.5,113.0 701.8,121.5 704.0,129.0 C706.2,136.5 708.2,144.5 709.0,152.0 C709.8,159.5 710.2,165.2 709.0,174.0 C707.8,182.8 705.0,194.7 702.0,205.0 C699.0,215.3 694.3,224.8 691.0,236.0 C687.7,247.2 685.0,260.8 682.0,272.0 C679.0,283.2 677.5,290.3 673.0,303.0 C668.5,315.7 660.2,335.3 655.0,348.0 C649.8,360.7 646.3,367.2 642.0,379.0 C637.7,390.8 632.0,406.3 629.0,419.0 C626.0,431.7 624.5,443.0 624.0,455.0 C623.5,467.0 625.2,480.7 626.0,491.0 C626.8,501.3 630.0,510.2 629.0,517.0 C628.0,523.8 623.0,525.2 620.0,532.0 C617.0,538.8 614.2,547.8 611.0,558.0 C607.8,568.2 603.5,584.7 601.0,593.0 C598.5,601.3 600.5,603.5 596.0,608.0" fill="none" stroke="#f0a050" stroke-width="1"/><path d="M596,608 C584,614 564,624 551,635" fill="none" stroke="#b8b8c2" stroke-width="8" opacity="0.45" filter="url(#bl2)"/><path d="M551,635 L566,648 L575,667 L585,696 L595,718 L601,738 L617,757 L630,773 L646,789 L669,799 L697,799" fill="none" stroke="#e8a060" stroke-width="1" opacity="0.7"/><path d="M725,313 C723,307 728,301 730,303 C732,306 730,312 725,313 Z" fill="#d8cc98"/><clipPath id="cg"><path d="M439,666 L513,651 L578,653 L642,664 L697,641 L749,635 L749,902 L439,902 Z"/></clipPath><g clip-path="url(#cg)"><line x1="1859.7" y1="636.5" x2="28938.4" y2="8734.6" stroke="#444444" stroke-width="1"/><line x1="1859.7" y1="636.5" x2="612.2" y2="518.2" stroke="#444444" stroke-width="1"/><line x1="1650.9" y1="616.7" x2="21490.2" y2="8739.6" stroke="#444444" stroke-width="1"/><line x1="1938.1" y1="660.0" x2="586.0" y2="520.6" stroke="#444444" stroke-width="1"/><line x1="1484.2" y1="600.9" x2="14041.9" y2="8744.7" stroke="#444444" stroke-width="1"/><line x1="2040.5" y1="690.6" x2="557.5" y2="523.2" stroke="#444444" stroke-width="1"/><line x1="1347.9" y1="588.0" x2="6593.7" y2="8749.8" stroke="#444444" stroke-width="1"/><line x1="2179.4" y1="732.1" x2="526.6" y2="526.0" stroke="#444444" stroke-width="1"/><line x1="1234.5" y1="577.2" x2="-854.6" y2="8754.9" stroke="#444444" stroke-width="1"/><line x1="2379.1" y1="791.9" x2="492.8" y2="529.1" stroke="#444444" stroke-width="1"/><line x1="1138.5" y1="568.1" x2="-8302.9" y2="8760.0" stroke="#444444" stroke-width="1"/><line x1="2690.3" y1="884.9" x2="455.8" y2="532.5" stroke="#444444" stroke-width="1"/><line x1="1056.4" y1="560.3" x2="-15751.1" y2="8765.1" stroke="#444444" stroke-width="1"/><line x1="3242.5" y1="1050.1" x2="415.1" y2="536.2" stroke="#444444" stroke-width="1"/><line x1="985.2" y1="553.6" x2="-23199.4" y2="8770.2" stroke="#444444" stroke-width="1"/><line x1="4493.3" y1="1424.1" x2="370.1" y2="540.3" stroke="#444444" stroke-width="1"/><line x1="923.0" y1="547.7" x2="-3546.4" y2="1712.4" stroke="#2d7a2d" stroke-width="1"/><line x1="10047.9" y1="3085.3" x2="320.0" y2="544.9" stroke="#6e2828" stroke-width="1"/><line x1="868.1" y1="542.5" x2="-1886.8" y2="1124.9" stroke="#444444" stroke-width="1"/><line x1="24779.3" y1="8737.4" x2="264.0" y2="550.0" stroke="#444444" stroke-width="1"/><line x1="819.3" y1="537.9" x2="-1286.8" y2="912.5" stroke="#444444" stroke-width="1"/><line x1="17884.7" y1="8742.1" x2="200.9" y2="555.8" stroke="#444444" stroke-width="1"/><line x1="775.7" y1="533.7" x2="-977.1" y2="802.9" stroke="#444444" stroke-width="1"/><line x1="10990.0" y1="8746.8" x2="129.4" y2="562.3" stroke="#444444" stroke-width="1"/><line x1="736.4" y1="530.0" x2="-788.1" y2="736.0" stroke="#444444" stroke-width="1"/><line x1="4095.4" y1="8751.6" x2="47.5" y2="569.8" stroke="#444444" stroke-width="1"/><line x1="700.9" y1="526.6" x2="-660.8" y2="690.9" stroke="#444444" stroke-width="1"/><line x1="-2799.2" y1="8756.3" x2="-47.1" y2="578.4" stroke="#444444" stroke-width="1"/><line x1="668.7" y1="523.6" x2="-569.1" y2="658.5" stroke="#444444" stroke-width="1"/><line x1="-9693.9" y1="8761.0" x2="-157.7" y2="588.5" stroke="#444444" stroke-width="1"/><line x1="639.2" y1="520.8" x2="-500.0" y2="634.0" stroke="#444444" stroke-width="1"/><line x1="-16588.5" y1="8765.7" x2="-288.6" y2="600.5" stroke="#444444" stroke-width="1"/><line x1="612.2" y1="518.2" x2="-446.0" y2="614.9" stroke="#444444" stroke-width="1"/><line x1="-23483.1" y1="8770.4" x2="-446.0" y2="614.9" stroke="#444444" stroke-width="1"/></g></svg><div class="t" style="left:235px;top:41px;color:#fff;font-size:11px;">User Persp</div><div class="t" style="left:285px;top:974px;color:#fff;font-size:11px;">(0) Plane.001</div><svg style="position:absolute;left:222px;top:930px;" width="34" height="40" viewBox="0 0 34 40"><path d="M19 12 V37" stroke="#1a1ae6" stroke-width="2"/><path d="M1 37 H20" stroke="#22c022" stroke-width="2"/><path d="M1 36 H8" stroke="#c02020" stroke-width="1"/><text x="22" y="11" font-size="10" fill="#2a2ae0" font-family="Liberation Sans">z</text><text x="4" y="34" font-size="10" fill="#40c040" font-family="Liberation Sans">y</text></svg><svg style="position:absolute;left:650px;top:811px;" width="50" height="50" viewBox="0 0 50 50"><circle cx="25" cy="24.5" r="10" fill="none" stroke="#fff" stroke-width="1.2"/><circle cx="25" cy="24.5" r="10" fill="none" stroke="#d02020" stroke-width="1.2" stroke-dasharray="4 4"/><path d="M4.5 24.5 H19.5 M30.5 24.5 H45 M25 5 V19.5 M25 29.5 V44.5" stroke="#000" stroke-width="1.2"/></svg><svg style="position:absolute;left:615px;top:780px;" width="120" height="140" viewBox="0 0 120 140"><path d="M86 77 V28" stroke="#1010d0" stroke-width="2"/><path d="M86 10.5 L81.5 29.5 L90.5 29.5 Z" fill="#1010e0"/><path d="M77 85 L54 69" stroke="#c81818" stroke-width="1.6"/><path d="M43 58 L46.5 69 L54.5 62 Z" fill="#e01010"/><path d="M72.5 99 L29 120.5" stroke="#18c818" stroke-width="1.6"/><path d="M9 130.5 L25 116 L30 126.5 Z" fill="#10d010"/><circle cx="86" cy="92.5" r="15" fill="none" stroke="#fff" stroke-width="1.3"/><circle cx="86" cy="92.5" r="3" fill="#d89a50"/></svg><div style="left:1370px;top:28px;width:179px;height:965px;background:#727272;"></div><div style="left:1370px;top:28px;width:2px;height:965px;background:#7e7e7e;"></div><div style="left:1532px;top:33px;width:14px;height:957px;background:#5f5f5f;border-radius:7px"></div><div style="left:1533px;top:162px;width:12px;height:826px;box-sizing:border-box;border:1px solid #505050;border-radius:6px 6px 6px 6px;background:linear-gradient(90deg,#8a8a8a,#a0a0a0,#8a8a8a);"></div><div style="left:1378px;top:28px;width:111px;height:5px;box-sizing:border-box;border:1px solid #191919;border-radius:0px 0px 0px 0px;background:linear-gradient(#a2a2a2,#b8b8b8);border-top:none"></div><div style="left:1378px;top:32px;width:111px;height:21px;box-sizing:border-box;border:1px solid #191919;border-radius:0px 0px 0px 0px;background:linear-gradient(#a2a2a2,#b8b8b8);"></div><svg style="position:absolute;left:1386px;top:38px;" width="5" height="8" viewBox="0 0 5 8"><path d="M4 0.5 L0.5 4 L4 7.5 Z" fill="#7a7a7a"/></svg><div class="t" style="left:1394px;top:37px;color:#000;font-size:11px;">Y:</div><svg style="position:absolute;left:1477px;top:38px;" width="5" height="8" viewBox="0 0 5 8"><path d="M1 0.5 L4.5 4 L1 7.5 Z" fill="#7a7a7a"/></svg><div class="t" style="right:429px;top:37px;color:#000;font-size:11px;">-0°</div><div style="left:1378px;top:52px;width:111px;height:20px;box-sizing:border-box;border:1px solid #191919;border-radius:0px 0px 7px 7px;background:linear-gradient(#a2a2a2,#b8b8b8);"></div><svg style="position:absolute;left:1386px;top:58px;" width="5" height="8" viewBox="0 0 5 8"><path d="M4 0.5 L0.5 4 L4 7.5 Z" fill="#7a7a7a"/></svg><div class="t" style="left:1394px;top:56px;color:#000;font-size:11px;">Z:</div><svg style="position:absolute;left:1477px;top:58px;" width="5" height="8" viewBox="0 0 5 8"><path d="M1 0.5 L4.5 4 L1 7.5 Z" fill="#7a7a7a"/></svg><div class="t" style="right:429px;top:56px;color:#000;font-size:11px;">0°</div><div style="left:1497px;top:28px;width:28px;height:5px;box-sizing:border-box;border:1px solid #191919;border-radius:0px 0px 0px 0px;background:linear-gradient(#b0b0b0,#898989);border-top:none"></div><div style="left:1497px;top:32px;width:28px;height:21px;box-sizing:border-box;border:1px solid #191919;border-radius:0px 0px 0px 0px;background:linear-gradient(#a2a2a2,#929292);"></div><svg style="position:absolute;left:1503px;top:35px;" width="16" height="14" viewBox="0 0 16 14"><path d="M8.5 7 V4 A3 3 0 0 0 2.5 4 V4.5" fill="none" stroke="#111" stroke-width="2.4"/><path d="M8.5 7 V4 A3 3 0 0 0 2.5 4 V4.5" fill="none" stroke="#e8e8e8" stroke-width="1"/><rect x="4.5" y="6.5" width="10" height="6.5" fill="#eeeeee" stroke="#111" stroke-width="1"/><path d="M5 9 H14 M5 11 H14" stroke="#c8c8c8" stroke-width="0.6"/><rect x="8.8" y="8.3" width="1.5" height="2.2" fill="#111"/></svg><div style="left:1497px;top:52px;width:28px;height:20px;box-sizing:border-box;border:1px solid #191919;border-radius:0px 0px 5px 5px;background:linear-gradient(#a2a2a2,#929292);"></div><svg style="position:absolute;left:1503px;top:55px;" width="16" height="14" viewBox="0 0 16 14"><path d="M8.5 7 V4 A3 3 0 0 0 2.5 4 V4.5" fill="none" stroke="#111" stroke-width="2.4"/><path d="M8.5 7 V4 A3 3 0 0 0 2.5 4 V4.5" fill="none" stroke="#e8e8e8" stroke-width="1"/><rect x="4.5" y="6.5" width="10" height="6.5" fill="#eeeeee" stroke="#111" stroke-width="1"/><path d="M5 9 H14 M5 11 H14" stroke="#c8c8c8" stroke-width="0.6"/><rect x="8.8" y="8.3" width="1.5" height="2.2" fill="#111"/></svg><div style="left:1378px;top:75px;width:147px;height:20px;box-sizing:border-box;border:1px solid #111;border-radius:5px 5px 5px 5px;background:linear-gradient(#555555,#383838);"></div><div class="t" style="left:1386px;top:80px;color:#fff;font-size:11px;">XYZ Euler</div><svg style="position:absolute;left:1514px;top:78px;" width="7" height="12" viewBox="0 0 7 12"><path d="M0.5 5 L3.5 0.5 L6.5 5 Z M0.5 7 L3.5 11.5 L6.5 7 Z" fill="#cfcfcf"/></svg><div class="t" style="left:1386px;top:102px;color:#000;font-size:11px;">Scale:</div><div style="left:1378px;top:118px;width:111px;height:20px;box-sizing:border-box;border:1px solid #191919;border-radius:7px 7px 0px 0px;background:linear-gradient(#a2a2a2,#b8b8b8);"></div><svg style="position:absolute;left:1386px;top:124px;" width="5" height="8" viewBox="0 0 5 8"><path d="M4 0.5 L0.5 4 L4 7.5 Z" fill="#7a7a7a"/></svg><div class="t" style="left:1394px;top:122px;color:#000;font-size:11px;">X:</div><svg style="position:absolute;left:1477px;top:124px;" width="5" height="8" viewBox="0 0 5 8"><path d="M1 0.5 L4.5 4 L1 7.5 Z" fill="#7a7a7a"/></svg><div class="t" style="right:429px;top:122px;color:#000;font-size:11px;">0.768</div><div style="left:1378px;top:137px;width:111px;height:20px;box-sizing:border-box;border:1px solid #191919;border-radius:0px 0px 0px 0px;background:linear-gradient(#a2a2a2,#b8b8b8);"></div><svg style="position:absolute;left:1386px;top:143px;" width="5" height="8" viewBox="0 0 5 8"><path d="M4 0.5 L0.5 4 L4 7.5 Z" fill="#7a7a7a"/></svg><div class="t" style="left:1394px;top:141px;color:#000;font-size:11px;">Y:</div><svg style="position:absolute;left:1477px;top:143px;" width="5" height="8" viewBox="0 0 5 8"><path d="M1 0.5 L4.5 4 L1 7.5 Z" fill="#7a7a7a"/></svg><div class="t" style="right:429px;top:141px;color:#000;font-size:11px;">0.136</div><div style="left:1378px;top:156px;width:111px;height:20px;box-sizing:border-box;border:1px solid #191919;border-radius:0px 0px 7px 7px;background:linear-gradient(#a2a2a2,#b8b8b8);"></div><svg style="position:absolute;left:1386px;top:162px;" width="5" height="8" viewBox="0 0 5 8"><path d="M4 0.5 L0.5 4 L4 7.5 Z" fill="#7a7a7a"/></svg><div class="t" style="left:1394px;top:160px;color:#000;font-size:11px;">Z:</div><svg style="position:absolute;left:1477px;top:162px;" width="5" height="8" viewBox="0 0 5 8"><path d="M1 0.5 L4.5 4 L1 7.5 Z" fill="#7a7a7a"/></svg><div class="t" style="right:429px;top:160px;color:#000;font-size:11px;">0.563</div><div style="left:1497px;top:118px;width:28px;height:20px;box-sizing:border-box;border:1px solid #191919;border-radius:5px 5px 0px 0px;background:linear-gradient(#a2a2a2,#929292);"></div><svg style="position:absolute;left:1503px;top:121px;" width="16" height="14" viewBox="0 0 16 14"><path d="M8.5 7 V4 A3 3 0 0 0 2.5 4 V4.5" fill="none" stroke="#111" stroke-width="2.4"/><path d="M8.5 7 V4 A3 3 0 0 0 2.5 4 V4.5" fill="none" stroke="#e8e8e8" stroke-width="1"/><rect x="4.5" y="6.5" width="10" height="6.5" fill="#eeeeee" stroke="#111" stroke-width="1"/><path d="M5 9 H14 M5 11 H14" stroke="#c8c8c8" stroke-width="0.6"/><rect x="8.8" y="8.3" width="1.5" height="2.2" fill="#111"/></svg><div style="left:1497px;top:137px;width:28px;height:20px;box-sizing:border-box;border:1px solid #191919;border-radius:0px 0px 0px 0px;background:linear-gradient(#a2a2a2,#929292);"></div><svg style="position:absolute;left:1503px;top:140px;" width="16" height="14" viewBox="0 0 16 14"><path d="M8.5 7 V4 A3 3 0 0 0 2.5 4 V4.5" fill="none" stroke="#111" stroke-width="2.4"/><path d="M8.5 7 V4 A3 3 0 0 0 2.5 4 V4.5" fill="none" stroke="#e8e8e8" stroke-width="1"/><rect x="4.5" y="6.5" width="10" height="6.5" fill="#eeeeee" stroke="#111" stroke-width="1"/><path d="M5 9 H14 M5 11 H14" stroke="#c8c8c8" stroke-width="0.6"/><rect x="8.8" y="8.3" width="1.5" height="2.2" fill="#111"/></svg><div style="left:1497px;top:156px;width:28px;height:20px;box-sizing:border-box;border:1px solid #191919;border-radius:0px 0px 5px 5px;background:linear-gradient(#a2a2a2,#929292);"></div><svg style="position:absolute;left:1503px;top:159px;" width="16" height="14" viewBox="0 0 16 14"><path d="M8.5 7 V4 A3 3 0 0 0 2.5 4 V4.5" fill="none" stroke="#111" stroke-width="2.4"/><path d="M8.5 7 V4 A3 3 0 0 0 2.5 4 V4.5" fill="none" stroke="#e8e8e8" stroke-width="1"/><rect x="4.5" y="6.5" width="10" height="6.5" fill="#eeeeee" stroke="#111" stroke-width="1"/><path d="M5 9 H14 M5 11 H14" stroke="#c8c8c8" stroke-width="0.6"/><rect x="8.8" y="8.3" width="1.5" height="2.2" fill="#111"/></svg><div class="t" style="left:1386px;top:184px;color:#000;font-size:11px;">Dimensions:</div><div style="left:1378px;top:200px;width:147px;height:19px;box-sizing:border-box;border:1px solid #191919;border-radius:7px 7px 0px 0px;background:linear-gradient(#a2a2a2,#b8b8b8);"></div><svg style="position:absolute;left:1386px;top:205px;" width="5" height="8" viewBox="0 0 5 8"><path d="M4 0.5 L0.5 4 L4 7.5 Z" fill="#7a7a7a"/></svg><div class="t" style="left:1394px;top:203px;color:#000;font-size:11px;">X:</div><svg style="position:absolute;left:1513px;top:205px;" width="5" height="8" viewBox="0 0 5 8"><path d="M1 0.5 L4.5 4 L1 7.5 Z" fill="#7a7a7a"/></svg><div class="t" style="right:393px;top:203px;color:#000;font-size:11px;">2.690</div><div style="left:1378px;top:218px;width:147px;height:21px;box-sizing:border-box;border:1px solid #191919;border-radius:0px 0px 0px 0px;background:linear-gradient(#a2a2a2,#b8b8b8);"></div><svg style="position:absolute;left:1386px;top:224px;" width="5" height="8" viewBox="0 0 5 8"><path d="M4 0.5 L0.5 4 L4 7.5 Z" fill="#7a7a7a"/></svg><div class="t" style="left:1394px;top:223px;color:#000;font-size:11px;">Y:</div><svg style="position:absolute;left:1513px;top:224px;" width="5" height="8" viewBox="0 0 5 8"><path d="M1 0.5 L4.5 4 L1 7.5 Z" fill="#7a7a7a"/></svg><div class="t" style="right:393px;top:223px;color:#000;font-size:11px;">6.863</div><div style="left:1378px;top:238px;width:147px;height:20px;box-sizing:border-box;border:1px solid #191919;border-radius:0px 0px 7px 7px;background:linear-gradient(#a2a2a2,#b8b8b8);"></div><svg style="position:absolute;left:1386px;top:244px;" width="5" height="8" viewBox="0 0 5 8"><path d="M4 0.5 L0.5 4 L4 7.5 Z" fill="#7a7a7a"/></svg><div class="t" style="left:1394px;top:242px;color:#000;font-size:11px;">Z:</div><svg style="position:absolute;left:1513px;top:244px;" width="5" height="8" viewBox="0 0 5 8"><path d="M1 0.5 L4.5 4 L1 7.5 Z" fill="#7a7a7a"/></svg><div class="t" style="right:393px;top:242px;color:#000;font-size:11px;">1.921</div><div style="left:1375px;top:266px;width:154px;height:1px;background:#5c5c5c;"></div><div style="left:1375px;top:267px;width:154px;height:1px;background:#7e7e7e;"></div><svg style="position:absolute;left:1383px;top:275px;" width="9" height="8" viewBox="0 0 9 8"><path d="M0 0.5 L8 0.5 L4 7.5 Z" fill="#111"/></svg><div style="left:1396px;top:271px;width:14px;height:14px;box-sizing:border-box;border:1px solid #111;border-radius:3px 3px 3px 3px;background:linear-gradient(#555555,#383838);"></div><svg style="position:absolute;left:1397px;top:271px;" width="14" height="13" viewBox="0 0 14 13"><path d="M2 6.5 L5.5 10 L12 1.5" fill="none" stroke="#fff" stroke-width="1.8"/></svg><div class="t" style="left:1415px;top:273px;color:#000;font-size:11px;font-size:11.5px;letter-spacing:0.2px">Grease Pencil</div><svg style="position:absolute;left:1512px;top:278px;" width="12" height="6" viewBox="0 0 12 6"><rect x="0" y="0" width="1" height="1" fill="#1a1a1a"/><rect x="1" y="1" width="1" height="1" fill="#9a9a9a"/><rect x="0" y="3" width="1" height="1" fill="#1a1a1a"/><rect x="1" y="4" width="1" height="1" fill="#9a9a9a"/><rect x="3" y="0" width="1" height="1" fill="#1a1a1a"/><rect x="4" y="1" width="1" height="1" fill="#9a9a9a"/><rect x="3" y="3" width="1" height="1" fill="#1a1a1a"/><rect x="4" y="4" width="1" height="1" fill="#9a9a9a"/><rect x="6" y="0" width="1" height="1" fill="#1a1a1a"/><rect x="7" y="1" width="1" height="1" fill="#9a9a9a"/><rect x="6" y="3" width="1" height="1" fill="#1a1a1a"/><rect x="7" y="4" width="1" height="1" fill="#9a9a9a"/><rect x="9" y="0" width="1" height="1" fill="#1a1a1a"/><rect x="10" y="1" width="1" height="1" fill="#9a9a9a"/><rect x="9" y="3" width="1" height="1" fill="#1a1a1a"/><rect x="10" y="4" width="1" height="1" fill="#9a9a9a"/></svg><div style="left:1378px;top:304px;width:32px;height:20px;box-sizing:border-box;border:1px solid #111;border-radius:5px 0px 0px 5px;background:linear-gradient(#555555,#383838);"></div><svg style="position:absolute;left:1382px;top:307px;" width="14" height="14" viewBox="0 0 14 14"><path d="M1 13 L2 9 L10 1 L13 4 L5 12 Z" fill="#9ad05a" stroke="#222" stroke-width="0.8"/><path d="M10 1 L13 4" stroke="#e04040" stroke-width="2"/></svg><svg style="position:absolute;left:1400px;top:308px;" width="7" height="12" viewBox="0 0 7 12"><path d="M0.5 5 L3.5 0.5 L6.5 5 Z M0.5 7 L3.5 11.5 L6.5 7 Z" fill="#cfcfcf"/></svg><div style="left:1409px;top:304px;width:116px;height:20px;box-sizing:border-box;border:1px solid #191919;border-radius:0px 5px 5px 0px;background:linear-gradient(#b0b0b0,#898989);"></div><svg style="position:absolute;left:1414px;top:308px;" width="12" height="12" viewBox="0 0 12 12"><path d="M4.5 0.5h3v4h4v3h-4v4h-3v-4h-4v-3h4z" fill="#fff" stroke="#222" stroke-width="1"/></svg><div class="t" style="left:1274px;width:400px;text-align:center;top:309px;color:#000;font-size:11px;">New</div><div style="left:1378px;top:327px;width:147px;height:19px;box-sizing:border-box;border:1px solid #191919;border-radius:5px 5px 5px 5px;background:linear-gradient(#b0b0b0,#898989);"></div><div class="t" style="left:1251px;width:400px;text-align:center;top:331px;color:#000;font-size:11px;">New Layer</div><div style="left:1378px;top:349px;width:73px;height:19px;box-sizing:border-box;border:1px solid #5a5a5a;border-radius:5px 0px 0px 5px;background:linear-gradient(#878787,#7a7a7a);"></div><div class="t" style="left:1383px;top:353px;color:#5a5a5a;font-size:11px;">Delete Fra...</div><div style="left:1450px;top:349px;width:75px;height:19px;box-sizing:border-box;border:1px solid #5a5a5a;border-radius:0px 5px 5px 0px;background:linear-gradient(#878787,#7a7a7a);"></div><div class="t" style="left:1287px;width:400px;text-align:center;top:353px;color:#5a5a5a;font-size:11px;">Convert</div><div style="left:1375px;top:375px;width:154px;height:1px;background:#5c5c5c;"></div><div style="left:1375px;top:376px;width:154px;height:1px;background:#7e7e7e;"></div><svg style="position:absolute;left:1383px;top:383px;" width="9" height="8" viewBox="0 0 9 8"><path d="M0 0.5 L8 0.5 L4 7.5 Z" fill="#111"/></svg><div class="t" style="left:1395px;top:381px;color:#000;font-size:11px;font-size:11.5px;letter-spacing:0.2px">View</div><svg style="position:absolute;left:1512px;top:386px;" width="12" height="6" viewBox="0 0 12 6"><rect x="0" y="0" width="1" height="1" fill="#1a1a1a"/><rect x="1" y="1" width="1" height="1" fill="#9a9a9a"/><rect x="0" y="3" width="1" height="1" fill="#1a1a1a"/><rect x="1" y="4" width="1" height="1" fill="#9a9a9a"/><rect x="3" y="0" width="1" height="1" fill="#1a1a1a"/><rect x="4" y="1" width="1" height="1" fill="#9a9a9a"/><rect x="3" y="3" width="1" height="1" fill="#1a1a1a"/><rect x="4" y="4" width="1" height="1" fill="#9a9a9a"/><rect x="6" y="0" width="1" height="1" fill="#1a1a1a"/><rect x="7" y="1" width="1" height="1" fill="#9a9a9a"/><rect x="6" y="3" width="1" height="1" fill="#1a1a1a"/><rect x="7" y="4" width="1" height="1" fill="#9a9a9a"/><rect x="9" y="0" width="1" height="1" fill="#1a1a1a"/><rect x="10" y="1" width="1" height="1" fill="#9a9a9a"/><rect x="9" y="3" width="1" height="1" fill="#1a1a1a"/><rect x="10" y="4" width="1" height="1" fill="#9a9a9a"/></svg><div style="left:1378px;top:408px;width:147px;height:20px;box-sizing:border-box;border:1px solid #191919;border-radius:9px 9px 9px 9px;background:linear-gradient(#a2a2a2,#b8b8b8);"></div><svg style="position:absolute;left:1385px;top:414px;" width="5" height="8" viewBox="0 0 5 8"><path d="M4 0.5 L0.5 4 L4 7.5 Z" fill="#7a7a7a"/></svg><div class="t" style="left:1394px;top:413px;color:#000;font-size:11px;">Lens:</div><div class="t" style="right:393px;top:413px;color:#000;font-size:11px;">35.000</div><svg style="position:absolute;left:1513px;top:414px;" width="5" height="8" viewBox="0 0 5 8"><path d="M1 0.5 L4.5 4 L1 7.5 Z" fill="#7a7a7a"/></svg><div class="t" style="left:1386px;top:435px;color:#000;font-size:11px;">Lock to Object:</div><div style="left:1378px;top:452px;width:147px;height:20px;box-sizing:border-box;border:1px solid #191919;border-radius:5px 5px 5px 5px;background:linear-gradient(#a0a0a0,#b4b4b4);"></div><svg style="position:absolute;left:1383px;top:455px;" width="14" height="14" viewBox="0 0 14 14"><path d="M7 1 L13 4 L13 10 L7 13 L1 10 L1 4 Z" fill="#e8a050" stroke="#333" stroke-width="0.8"/><path d="M1 4 L7 7 L13 4 M7 7 V13" fill="none" stroke="#fff3" stroke-width="1"/><path d="M1 4 L7 1 L13 4 L7 7 Z" fill="#f6c690"/></svg><div style="left:1381px;top:477px;width:14px;height:14px;box-sizing:border-box;border:1px solid #111;border-radius:3px 3px 3px 3px;background:linear-gradient(#555555,#383838);"></div><div class="t" style="left:1403px;top:479px;color:#000;font-size:11px;">Lock to Cursor</div><div style="left:1381px;top:502px;width:14px;height:14px;box-sizing:border-box;border:1px solid #111;border-radius:3px 3px 3px 3px;background:linear-gradient(#555555,#383838);"></div><div class="t" style="left:1403px;top:504px;color:#000;font-size:11px;">Lock Camera to View</div><div class="t" style="left:1386px;top:529px;color:#000;font-size:11px;">Clip:</div><div style="left:1378px;top:544px;width:147px;height:20px;box-sizing:border-box;border:1px solid #191919;border-radius:7px 7px 0px 0px;background:linear-gradient(#a2a2a2,#b8b8b8);"></div><svg style="position:absolute;left:1386px;top:550px;" width="5" height="8" viewBox="0 0 5 8"><path d="M4 0.5 L0.5 4 L4 7.5 Z" fill="#7a7a7a"/></svg><div class="t" style="left:1394px;top:548px;color:#000;font-size:11px;">Start:</div><svg style="position:absolute;left:1513px;top:550px;" width="5" height="8" viewBox="0 0 5 8"><path d="M1 0.5 L4.5 4 L1 7.5 Z" fill="#7a7a7a"/></svg><div class="t" style="right:393px;top:548px;color:#000;font-size:11px;">0.100</div><div style="left:1378px;top:563px;width:147px;height:20px;box-sizing:border-box;border:1px solid #191919;border-radius:0px 0px 7px 7px;background:linear-gradient(#a2a2a2,#b8b8b8);"></div><svg style="position:absolute;left:1386px;top:569px;" width="5" height="8" viewBox="0 0 5 8"><path d="M4 0.5 L0.5 4 L4 7.5 Z" fill="#7a7a7a"/></svg><div class="t" style="left:1394px;top:567px;color:#000;font-size:11px;">End:</div><svg style="position:absolute;left:1513px;top:569px;" width="5" height="8" viewBox="0 0 5 8"><path d="M1 0.5 L4.5 4 L1 7.5 Z" fill="#7a7a7a"/></svg><div class="t" style="right:393px;top:567px;color:#000;font-size:11px;">1000.000</div><div class="t" style="left:1386px;top:589px;color:#4e4e4e;font-size:11px;">Local Camera:</div><div style="left:1378px;top:605px;width:147px;height:19px;box-sizing:border-box;border:1px solid #5a5a5a;border-radius:5px 5px 5px 5px;background:linear-gradient(#8c8c8c,#959595);"></div><svg style="position:absolute;left:1383px;top:607px;" width="14" height="14" viewBox="0 0 14 14"><path d="M7 1 L13 4 L13 10 L7 13 L1 10 L1 4 Z" fill="#c09a70" stroke="#555" stroke-width="0.8"/><path d="M1 4 L7 1 L13 4 L7 7 Z" fill="#d8bc98"/></svg><div class="t" style="left:1402px;top:609px;color:#555;font-size:11px;">Camera</div><svg style="position:absolute;left:1508px;top:608px;" width="13" height="13" viewBox="0 0 13 13"><path d="M2 2 L11 11 M11 2 L2 11" stroke="#666" stroke-width="3"/><path d="M2 2 L11 11 M11 2 L2 11" stroke="#e0e0e0" stroke-width="1.4"/></svg><div style="left:1381px;top:632px;width:14px;height:14px;box-sizing:border-box;border:1px solid #111;border-radius:3px 3px 3px 3px;background:linear-gradient(#555555,#383838);"></div><div class="t" style="left:1403px;top:634px;color:#000;font-size:11px;">Render Border</div><div style="left:1375px;top:656px;width:154px;height:1px;background:#5c5c5c;"></div><div style="left:1375px;top:657px;width:154px;height:1px;background:#7e7e7e;"></div><svg style="position:absolute;left:1383px;top:664px;" width="9" height="8" viewBox="0 0 9 8"><path d="M0 0.5 L8 0.5 L4 7.5 Z" fill="#111"/></svg><div class="t" style="left:1395px;top:662px;color:#000;font-size:11px;font-size:11.5px;letter-spacing:0.2px">3D Cursor</div><svg style="position:absolute;left:1512px;top:667px;" width="12" height="6" viewBox="0 0 12 6"><rect x="0" y="0" width="1" height="1" fill="#1a1a1a"/><rect x="1" y="1" width="1" height="1" fill="#9a9a9a"/><rect x="0" y="3" width="1" height="1" fill="#1a1a1a"/><rect x="1" y="4" width="1" height="1" fill="#9a9a9a"/><rect x="3" y="0" width="1" height="1" fill="#1a1a1a"/><rect x="4" y="1" width="1" height="1" fill="#9a9a9a"/><rect x="3" y="3" width="1" height="1" fill="#1a1a1a"/><rect x="4" y="4" width="1" height="1" fill="#9a9a9a"/><rect x="6" y="0" width="1" height="1" fill="#1a1a1a"/><rect x="7" y="1" width="1" height="1" fill="#9a9a9a"/><rect x="6" y="3" width="1" height="1" fill="#1a1a1a"/><rect x="7" y="4" width="1" height="1" fill="#9a9a9a"/><rect x="9" y="0" width="1" height="1" fill="#1a1a1a"/><rect x="10" y="1" width="1" height="1" fill="#9a9a9a"/><rect x="9" y="3" width="1" height="1" fill="#1a1a1a"/><rect x="10" y="4" width="1" height="1" fill="#9a9a9a"/></svg><div class="t" style="left:1386px;top:694px;color:#000;font-size:11px;">Location:</div><div style="left:1378px;top:709px;width:147px;height:20px;box-sizing:border-box;border:1px solid #191919;border-radius:7px 7px 0px 0px;background:linear-gradient(#a2a2a2,#b8b8b8);"></div><svg style="position:absolute;left:1386px;top:715px;" width="5" height="8" viewBox="0 0 5 8"><path d="M4 0.5 L0.5 4 L4 7.5 Z" fill="#7a7a7a"/></svg><div class="t" style="left:1394px;top:713px;color:#000;font-size:11px;">X:</div><svg style="position:absolute;left:1513px;top:715px;" width="5" height="8" viewBox="0 0 5 8"><path d="M1 0.5 L4.5 4 L1 7.5 Z" fill="#7a7a7a"/></svg><div class="t" style="right:393px;top:713px;color:#000;font-size:11px;">1.1770</div><div style="left:1378px;top:728px;width:147px;height:21px;box-sizing:border-box;border:1px solid #191919;border-radius:0px 0px 0px 0px;background:linear-gradient(#a2a2a2,#b8b8b8);"></div><svg style="position:absolute;left:1386px;top:734px;" width="5" height="8" viewBox="0 0 5 8"><path d="M4 0.5 L0.5 4 L4 7.5 Z" fill="#7a7a7a"/></svg><div class="t" style="left:1394px;top:733px;color:#000;font-size:11px;">Y:</div><svg style="position:absolute;left:1513px;top:734px;" width="5" height="8" viewBox="0 0 5 8"><path d="M1 0.5 L4.5 4 L1 7.5 Z" fill="#7a7a7a"/></svg><div class="t" style="right:393px;top:733px;color:#000;font-size:11px;">1.1903</div><div style="left:1378px;top:748px;width:147px;height:20px;box-sizing:border-box;border:1px solid #191919;border-radius:0px 0px 7px 7px;background:linear-gradient(#a2a2a2,#b8b8b8);"></div><svg style="position:absolute;left:1386px;top:754px;" width="5" height="8" viewBox="0 0 5 8"><path d="M4 0.5 L0.5 4 L4 7.5 Z" fill="#7a7a7a"/></svg><div class="t" style="left:1394px;top:752px;color:#000;font-size:11px;">Z:</div><svg style="position:absolute;left:1513px;top:754px;" width="5" height="8" viewBox="0 0 5 8"><path d="M1 0.5 L4.5 4 L1 7.5 Z" fill="#7a7a7a"/></svg><div class="t" style="right:393px;top:752px;color:#000;font-size:11px;">-1.8564</div><div style="left:1375px;top:776px;width:154px;height:1px;background:#5c5c5c;"></div><div style="left:1375px;top:777px;width:154px;height:1px;background:#7e7e7e;"></div><svg style="position:absolute;left:1383px;top:784px;" width="9" height="8" viewBox="0 0 9 8"><path d="M0 0.5 L8 0.5 L4 7.5 Z" fill="#111"/></svg><div class="t" style="left:1395px;top:782px;color:#000;font-size:11px;font-size:11.5px;letter-spacing:0.2px">Item</div><svg style="position:absolute;left:1512px;top:787px;" width="12" height="6" viewBox="0 0 12 6"><rect x="0" y="0" width="1" height="1" fill="#1a1a1a"/><rect x="1" y="1" width="1" height="1" fill="#9a9a9a"/><rect x="0" y="3" width="1" height="1" fill="#1a1a1a"/><rect x="1" y="4" width="1" height="1" fill="#9a9a9a"/><rect x="3" y="0" width="1" height="1" fill="#1a1a1a"/><rect x="4" y="1" width="1" height="1" fill="#9a9a9a"/><rect x="3" y="3" width="1" height="1" fill="#1a1a1a"/><rect x="4" y="4" width="1" height="1" fill="#9a9a9a"/><rect x="6" y="0" width="1" height="1" fill="#1a1a1a"/><rect x="7" y="1" width="1" height="1" fill="#9a9a9a"/><rect x="6" y="3" width="1" height="1" fill="#1a1a1a"/><rect x="7" y="4" width="1" height="1" fill="#9a9a9a"/><rect x="9" y="0" width="1" height="1" fill="#1a1a1a"/><rect x="10" y="1" width="1" height="1" fill="#9a9a9a"/><rect x="9" y="3" width="1" height="1" fill="#1a1a1a"/><rect x="10" y="4" width="1" height="1" fill="#9a9a9a"/></svg><svg style="position:absolute;left:1383px;top:811px;" width="14" height="14" viewBox="0 0 14 14"><path d="M7 1 L13 4 L13 10 L7 13 L1 10 L1 4 Z" fill="#e8a050" stroke="#333" stroke-width="0.8"/><path d="M1 4 L7 1 L13 4 L7 7 Z" fill="#f6c690"/></svg><div style="left:1406px;top:809px;width:119px;height:20px;box-sizing:border-box;border:1px solid #191919;border-radius:5px 5px 5px 5px;background:linear-gradient(#a0a0a0,#b4b4b4);"></div><div class="t" style="left:1414px;top:814px;color:#000;font-size:11px;">Plane.001</div><div style="left:1375px;top:836px;width:154px;height:1px;background:#5c5c5c;"></div><div style="left:1375px;top:837px;width:154px;height:1px;background:#7e7e7e;"></div><svg style="position:absolute;left:1383px;top:845px;" width="8" height="9" viewBox="0 0 8 9"><path d="M0.5 0 L7.5 4 L0.5 8 Z" fill="#111"/></svg><div class="t" style="left:1395px;top:843px;color:#000;font-size:11px;font-size:11.5px;letter-spacing:0.2px">Display</div><svg style="position:absolute;left:1512px;top:848px;" width="12" height="6" viewBox="0 0 12 6"><rect x="0" y="0" width="1" height="1" fill="#1a1a1a"/><rect x="1" y="1" width="1" height="1" fill="#9a9a9a"/><rect x="0" y="3" width="1" height="1" fill="#1a1a1a"/><rect x="1" y="4" width="1" height="1" fill="#9a9a9a"/><rect x="3" y="0" width="1" height="1" fill="#1a1a1a"/><rect x="4" y="1" width="1" height="1" fill="#9a9a9a"/><rect x="3" y="3" width="1" height="1" fill="#1a1a1a"/><rect x="4" y="4" width="1" height="1" fill="#9a9a9a"/><rect x="6" y="0" width="1" height="1" fill="#1a1a1a"/><rect x="7" y="1" width="1" height="1" fill="#9a9a9a"/><rect x="6" y="3" width="1" height="1" fill="#1a1a1a"/><rect x="7" y="4" width="1" height="1" fill="#9a9a9a"/><rect x="9" y="0" width="1" height="1" fill="#1a1a1a"/><rect x="10" y="1" width="1" height="1" fill="#9a9a9a"/><rect x="9" y="3" width="1" height="1" fill="#1a1a1a"/><rect x="10" y="4" width="1" height="1" fill="#9a9a9a"/></svg><div style="left:1375px;top:860px;width:154px;height:1px;background:#5c5c5c;"></div><div style="left:1375px;top:861px;width:154px;height:1px;background:#7e7e7e;"></div><svg style="position:absolute;left:1383px;top:869px;" width="9" height="8" viewBox="0 0 9 8"><path d="M0 0.5 L8 0.5 L4 7.5 Z" fill="#111"/></svg><div class="t" style="left:1395px;top:867px;color:#000;font-size:11px;font-size:11.5px;letter-spacing:0.2px">Shading</div><svg style="position:absolute;left:1512px;top:872px;" width="12" height="6" viewBox="0 0 12 6"><rect x="0" y="0" width="1" height="1" fill="#1a1a1a"/><rect x="1" y="1" width="1" height="1" fill="#9a9a9a"/><rect x="0" y="3" width="1" height="1" fill="#1a1a1a"/><rect x="1" y="4" width="1" height="1" fill="#9a9a9a"/><rect x="3" y="0" width="1" height="1" fill="#1a1a1a"/><rect x="4" y="1" width="1" height="1" fill="#9a9a9a"/><rect x="3" y="3" width="1" height="1" fill="#1a1a1a"/><rect x="4" y="4" width="1" height="1" fill="#9a9a9a"/><rect x="6" y="0" width="1" height="1" fill="#1a1a1a"/><rect x="7" y="1" width="1" height="1" fill="#9a9a9a"/><rect x="6" y="3" width="1" height="1" fill="#1a1a1a"/><rect x="7" y="4" width="1" height="1" fill="#9a9a9a"/><rect x="9" y="0" width="1" height="1" fill="#1a1a1a"/><rect x="10" y="1" width="1" height="1" fill="#9a9a9a"/><rect x="9" y="3" width="1" height="1" fill="#1a1a1a"/><rect x="10" y="4" width="1" height="1" fill="#9a9a9a"/></svg><div style="left:1381px;top:896px;width:14px;height:14px;box-sizing:border-box;border:1px solid #111;border-radius:3px 3px 3px 3px;background:linear-gradient(#555555,#383838);"></div><div class="t" style="left:1403px;top:898px;color:#000;font-size:11px;">Backface Culling</div><div style="left:1375px;top:920px;width:154px;height:1px;background:#5c5c5c;"></div><div style="left:1375px;top:921px;width:154px;height:1px;background:#7e7e7e;"></div><svg style="position:absolute;left:1383px;top:928px;" width="8" height="9" viewBox="0 0 8 9"><path d="M0.5 0 L7.5 4 L0.5 8 Z" fill="#111"/></svg><div style="left:1396px;top:925px;width:14px;height:14px;box-sizing:border-box;border:1px solid #111;border-radius:3px 3px 3px 3px;background:linear-gradient(#555555,#383838);"></div><svg style="position:absolute;left:1397px;top:925px;" width="14" height="13" viewBox="0 0 14 13"><path d="M2 6.5 L5.5 10 L12 1.5" fill="none" stroke="#fff" stroke-width="1.8"/></svg><div class="t" style="left:1415px;top:926px;color:#000;font-size:11px;font-size:11.5px;letter-spacing:0.2px">Motion Tracking</div><svg style="position:absolute;left:1512px;top:932px;" width="12" height="6" viewBox="0 0 12 6"><rect x="0" y="0" width="1" height="1" fill="#1a1a1a"/><rect x="1" y="1" width="1" height="1" fill="#9a9a9a"/><rect x="0" y="3" width="1" height="1" fill="#1a1a1a"/><rect x="1" y="4" width="1" height="1" fill="#9a9a9a"/><rect x="3" y="0" width="1" height="1" fill="#1a1a1a"/><rect x="4" y="1" width="1" height="1" fill="#9a9a9a"/><rect x="3" y="3" width="1" height="1" fill="#1a1a1a"/><rect x="4" y="4" width="1" height="1" fill="#9a9a9a"/><rect x="6" y="0" width="1" height="1" fill="#1a1a1a"/><rect x="7" y="1" width="1" height="1" fill="#9a9a9a"/><rect x="6" y="3" width="1" height="1" fill="#1a1a1a"/><rect x="7" y="4" width="1" height="1" fill="#9a9a9a"/><rect x="9" y="0" width="1" height="1" fill="#1a1a1a"/><rect x="10" y="1" width="1" height="1" fill="#9a9a9a"/><rect x="9" y="3" width="1" height="1" fill="#1a1a1a"/><rect x="10" y="4" width="1" height="1" fill="#9a9a9a"/></svg><div style="left:1375px;top:944px;width:154px;height:1px;background:#5c5c5c;"></div><div style="left:1375px;top:945px;width:154px;height:1px;background:#7e7e7e;"></div><svg style="position:absolute;left:1383px;top:952px;" width="8" height="9" viewBox="0 0 8 9"><path d="M0.5 0 L7.5 4 L0.5 8 Z" fill="#111"/></svg><div style="left:1396px;top:949px;width:14px;height:14px;box-sizing:border-box;border:1px solid #111;border-radius:3px 3px 3px 3px;background:linear-gradient(#555555,#383838);"></div><div class="t" style="left:1415px;top:950px;color:#000;font-size:11px;font-size:11.5px;letter-spacing:0.2px">Background Images</div><svg style="position:absolute;left:1512px;top:956px;" width="12" height="6" viewBox="0 0 12 6"><rect x="0" y="0" width="1" height="1" fill="#1a1a1a"/><rect x="1" y="1" width="1" height="1" fill="#9a9a9a"/><rect x="0" y="3" width="1" height="1" fill="#1a1a1a"/><rect x="1" y="4" width="1" height="1" fill="#9a9a9a"/><rect x="3" y="0" width="1" height="1" fill="#1a1a1a"/><rect x="4" y="1" width="1" height="1" fill="#9a9a9a"/><rect x="3" y="3" width="1" height="1" fill="#1a1a1a"/><rect x="4" y="4" width="1" height="1" fill="#9a9a9a"/><rect x="6" y="0" width="1" height="1" fill="#1a1a1a"/><rect x="7" y="1" width="1" height="1" fill="#9a9a9a"/><rect x="6" y="3" width="1" height="1" fill="#1a1a1a"/><rect x="7" y="4" width="1" height="1" fill="#9a9a9a"/><rect x="9" y="0" width="1" height="1" fill="#1a1a1a"/><rect x="10" y="1" width="1" height="1" fill="#9a9a9a"/><rect x="9" y="3" width="1" height="1" fill="#1a1a1a"/><rect x="10" y="4" width="1" height="1" fill="#9a9a9a"/></svg><div style="left:1375px;top:968px;width:154px;height:1px;background:#5c5c5c;"></div><div style="left:1375px;top:969px;width:154px;height:1px;background:#7e7e7e;"></div><svg style="position:absolute;left:1383px;top:976px;" width="8" height="9" viewBox="0 0 8 9"><path d="M0.5 0 L7.5 4 L0.5 8 Z" fill="#111"/></svg><div class="t" style="left:1395px;top:974px;color:#000;font-size:11px;font-size:11.5px;letter-spacing:0.2px">Transform Orientations</div><svg style="position:absolute;left:1512px;top:980px;" width="12" height="6" viewBox="0 0 12 6"><rect x="0" y="0" width="1" height="1" fill="#1a1a1a"/><rect x="1" y="1" width="1" height="1" fill="#9a9a9a"/><rect x="0" y="3" width="1" height="1" fill="#1a1a1a"/><rect x="1" y="4" width="1" height="1" fill="#9a9a9a"/><rect x="3" y="0" width="1" height="1" fill="#1a1a1a"/><rect x="4" y="1" width="1" height="1" fill="#9a9a9a"/><rect x="3" y="3" width="1" height="1" fill="#1a1a1a"/><rect x="4" y="4" width="1" height="1" fill="#9a9a9a"/><rect x="6" y="0" width="1" height="1" fill="#1a1a1a"/><rect x="7" y="1" width="1" height="1" fill="#9a9a9a"/><rect x="6" y="3" width="1" height="1" fill="#1a1a1a"/><rect x="7" y="4" width="1" height="1" fill="#9a9a9a"/><rect x="9" y="0" width="1" height="1" fill="#1a1a1a"/><rect x="10" y="1" width="1" height="1" fill="#9a9a9a"/><rect x="9" y="3" width="1" height="1" fill="#1a1a1a"/><rect x="10" y="4" width="1" height="1" fill="#9a9a9a"/></svg><div style="left:1550px;top:28px;width:1px;height:1092px;background:#000;"></div><div style="left:1551px;top:28px;width:351px;height:26px;background:#727272;"></div><div style="left:1560px;top:31px;width:30px;height:20px;box-sizing:border-box;border:1px solid #111;border-radius:5px 5px 5px 5px;background:linear-gradient(#555555,#383838);"></div><svg style="position:absolute;left:1565px;top:34px;" width="14" height="14" viewBox="0 0 14 14"><rect x="1" y="1" width="6" height="2" fill="#f0a030"/><path d="M3 3 V12 H7 M3 7 H7" stroke="#ccc" stroke-width="1" fill="none"/><rect x="7" y="6" width="6" height="2" fill="#eee"/><rect x="7" y="11" width="6" height="2" fill="#eee"/></svg><svg style="position:absolute;left:1580px;top:35px;" width="7" height="12" viewBox="0 0 7 12"><path d="M0.5 5 L3.5 0.5 L6.5 5 Z M0.5 7 L3.5 11.5 L6.5 7 Z" fill="#cfcfcf"/></svg><div class="t" style="left:1603px;top:37px;color:#000;font-size:11px;">View</div><div class="t" style="left:1647px;top:37px;color:#000;font-size:11px;">Search</div><div style="left:1694px;top:31px;width:119px;height:20px;box-sizing:border-box;border:1px solid #111;border-radius:5px 5px 5px 5px;background:linear-gradient(#555555,#383838);"></div><div class="t" style="left:1701px;top:37px;color:#fff;font-size:11px;">All Scenes</div><svg style="position:absolute;left:1802px;top:35px;" width="7" height="12" viewBox="0 0 7 12"><path d="M0.5 5 L3.5 0.5 L6.5 5 Z M0.5 7 L3.5 11.5 L6.5 7 Z" fill="#cfcfcf"/></svg><div style="left:1819px;top:31px;width:91px;height:20px;box-sizing:border-box;border:1px solid #191919;border-radius:6px 0px 0px 6px;background:linear-gradient(#8d8d8d,#b5b5b5);"></div><svg style="position:absolute;left:1822px;top:33px;" width="16" height="16" viewBox="0 0 16 16"><circle cx="10" cy="6" r="4.3" fill="#d8d8d8" stroke="#222" stroke-width="1.1"/><path d="M7 9 L2 14" stroke="#222" stroke-width="3"/><path d="M7 9 L2.5 13.5" stroke="#d07030" stroke-width="1.6"/></svg><div style="left:1551px;top:54px;width:275px;height:20px;background:#7b8086;"></div><div style="left:1826px;top:54px;width:60px;height:20px;background:#6e6e6e;"></div><div style="left:1551px;top:74px;width:275px;height:20px;background:#7b8086;"></div><div style="left:1826px;top:74px;width:60px;height:20px;background:#696969;"></div><div style="left:1551px;top:94px;width:275px;height:20px;background:#727272;"></div><div style="left:1826px;top:94px;width:60px;height:20px;background:#6e6e6e;"></div><div style="left:1551px;top:114px;width:275px;height:20px;background:#6d6d6d;"></div><div style="left:1826px;top:114px;width:60px;height:20px;background:#696969;"></div><div style="left:1551px;top:134px;width:275px;height:20px;background:#727272;"></div><div style="left:1826px;top:134px;width:60px;height:20px;background:#6e6e6e;"></div><div style="left:1551px;top:154px;width:275px;height:20px;background:#6d6d6d;"></div><div style="left:1826px;top:154px;width:60px;height:20px;background:#696969;"></div><div style="left:1551px;top:174px;width:275px;height:20px;background:#727272;"></div><div style="left:1826px;top:174px;width:60px;height:20px;background:#6e6e6e;"></div><div style="left:1551px;top:194px;width:275px;height:20px;background:#6d6d6d;"></div><div style="left:1826px;top:194px;width:60px;height:20px;background:#696969;"></div><div style="left:1551px;top:214px;width:275px;height:5px;background:#727272;"></div><div style="left:1826px;top:214px;width:60px;height:5px;background:#6e6e6e;"></div><div style="left:1825px;top:54px;width:1px;height:165px;background:#636363;"></div><div style="left:1845px;top:54px;width:1px;height:165px;background:#636363;"></div><div style="left:1865px;top:54px;width:1px;height:165px;background:#636363;"></div><div style="left:1551px;top:74px;width:274px;height:1px;background:#6a6e72;"></div><div style="left:1551px;top:54px;width:351px;height:1px;background:#7a7a7a;"></div><div style="left:1886px;top:54px;width:16px;height:165px;background:#727272;"></div><div style="left:1886px;top:58px;width:12px;height:158px;box-sizing:border-box;border:1px solid #555;border-radius:6px 6px 6px 6px;background:linear-gradient(90deg,#7e7e7e,#9a9a9a,#7e7e7e);"></div><div style="left:1551px;top:219px;width:351px;height:1px;background:#111;"></div><div style="left:1579px;top:64px;width:1px;height:155px;background:#3a3a3a;"></div><svg style="position:absolute;left:1554px;top:59px;" width="12" height="12" viewBox="0 0 12 12"><circle cx="6" cy="6" r="4.8" fill="#e8e8e8" stroke="#111" stroke-width="1.1"/><path d="M3.5 6 H8.5" stroke="#111" stroke-width="1.3"/></svg><div style="left:1566px;top:64px;width:8px;height:1px;background:#333;"></div><svg style="position:absolute;left:1573px;top:57px;" width="16" height="16" viewBox="0 0 16 16"><circle cx="8" cy="8" r="7.5" fill="#9aa0a8"/><circle cx="4" cy="3.5" r="1.4" fill="#e8e070"/><rect x="8" y="2.5" width="5" height="9" rx="2" fill="#5a88d0" stroke="#223" stroke-width="0.8"/><circle cx="6" cy="11" r="3.3" fill="#eee" stroke="#333" stroke-width="0.8"/></svg><div class="t" style="left:1593px;top:60px;color:#000;font-size:11px;">Scene</div><svg style="position:absolute;left:1580px;top:79px;" width="11" height="11" viewBox="0 0 11 11"><circle cx="5.5" cy="5.5" r="4.6" fill="none" stroke="#111" stroke-width="1.1"/><path d="M3 5.5 H8 M5.5 3 V8" stroke="#111" stroke-width="1.2"/></svg><svg style="position:absolute;left:1593px;top:77px;" width="15" height="15" viewBox="0 0 15 15"><rect x="3" y="3" width="10" height="10" fill="#d8d0b0" stroke="#222" stroke-width="0.8" transform="rotate(8 8 8)"/><rect x="1" y="1" width="10" height="10" fill="#e8f0ff" stroke="#222" stroke-width="0.9"/><path d="M4 8 L6 3 L8 6" stroke="#3060c0" stroke-width="1.4" fill="none"/></svg><div class="t" style="left:1612px;top:80px;color:#000;font-size:11px;">RenderLayers</div><div style="left:1690px;top:80px;width:1px;height:11px;background:#222;"></div><svg style="position:absolute;left:1701px;top:77px;" width="15" height="15" viewBox="0 0 15 15"><circle cx="7.5" cy="7.5" r="7.3" fill="#888"/><rect x="3" y="3" width="10" height="10" fill="#d8d0b0" stroke="#222" stroke-width="0.8"/><rect x="1.5" y="1.5" width="9" height="9" fill="#e8f0ff" stroke="#222" stroke-width="0.9"/></svg><svg style="position:absolute;left:1593px;top:97px;" width="15" height="15" viewBox="0 0 15 15"><circle cx="7.5" cy="7.5" r="7.2" fill="#9aa"/><circle cx="7.5" cy="7.5" r="5.5" fill="#3c78b8" stroke="#112" stroke-width="0.8"/><path d="M4 5 C6 4 7 7 5 9 C4 10 3 8 4 5 Z M8 3 C11 4 12 7 10 9 C9 7 9 5 8 3 Z" fill="#4aa050"/></svg><div class="t" style="left:1612px;top:100px;color:#000;font-size:11px;">World</div><svg style="position:absolute;left:1574px;top:119px;" width="11" height="11" viewBox="0 0 11 11"><circle cx="5.5" cy="5.5" r="4.6" fill="none" stroke="#111" stroke-width="1.1"/><path d="M3 5.5 H8 M5.5 3 V8" stroke="#111" stroke-width="1.2"/></svg><div style="left:1585px;top:124px;width:7px;height:1px;background:#333;"></div><svg style="position:absolute;left:1594px;top:117px;" width="14" height="14" viewBox="0 0 14 14"><path d="M1.5 2 L12.5 2 L7 12.5 Z" fill="none" stroke="#3a2a10" stroke-width="3"/><path d="M1.5 2 L12.5 2 L7 12.5 Z" fill="none" stroke="#f0a030" stroke-width="1.6"/></svg><div class="t" style="left:1612px;top:120px;color:#000;font-size:11px;">Busto_Domiciano</div><div style="left:1710px;top:120px;width:1px;height:11px;background:#222;"></div><svg style="position:absolute;left:1720px;top:118px;" width="14" height="14" viewBox="0 0 14 14"><path d="M2 2 L12 2 L7 11.5 Z" fill="none" stroke="#555" stroke-width="1"/><circle cx="2" cy="2" r="1.3" fill="#ddd" stroke="#333" stroke-width="0.6"/><circle cx="12" cy="2" r="1.3" fill="#ddd" stroke="#333" stroke-width="0.6"/><circle cx="7" cy="11.5" r="1.3" fill="#ddd" stroke="#333" stroke-width="0.6"/></svg><svg style="position:absolute;left:1829px;top:119px;" width="14" height="10" viewBox="0 0 14 10"><path d="M1 5 C4 0.5 10 0.5 13 5 C10 9.5 4 9.5 1 5 Z" fill="#fff" stroke="#222" stroke-width="0.8"/><circle cx="7" cy="5" r="2.3" fill="#111"/></svg><svg style="position:absolute;left:1851px;top:117px;" width="12" height="14" viewBox="0 0 12 14"><path d="M2 1 L2 11 L4.5 8.5 L7 13 L8.6 12.2 L6.3 7.8 L10 7.8 Z" fill="#fff" stroke="#111" stroke-width="0.9"/></svg><svg style="position:absolute;left:1869px;top:118px;" width="14" height="13" viewBox="0 0 14 13"><rect x="1" y="3" width="12" height="9" rx="1" fill="#ddd" stroke="#111" stroke-width="1"/><rect x="3" y="1" width="4" height="2.5" fill="#ddd" stroke="#111" stroke-width="0.8"/><circle cx="7" cy="7.5" r="2.6" fill="#333" stroke="#111"/><circle cx="7" cy="7.5" r="1" fill="#e04060"/></svg><svg style="position:absolute;left:1574px;top:139px;" width="11" height="11" viewBox="0 0 11 11"><circle cx="5.5" cy="5.5" r="4.6" fill="none" stroke="#111" stroke-width="1.1"/><path d="M3 5.5 H8 M5.5 3 V8" stroke="#111" stroke-width="1.2"/></svg><div style="left:1585px;top:144px;width:7px;height:1px;background:#333;"></div><svg style="position:absolute;left:1593px;top:136px;" width="16" height="16" viewBox="0 0 16 16"><circle cx="5" cy="4.5" r="3" fill="#f0a030" stroke="#332" stroke-width="0.8"/><circle cx="10" cy="4.5" r="3" fill="#f0a030" stroke="#332" stroke-width="0.8"/><rect x="2" y="7" width="9" height="6" fill="#f0a030" stroke="#332" stroke-width="0.8"/><path d="M11 9 L15 7 V13 L11 11 Z" fill="#f0a030" stroke="#332" stroke-width="0.7"/></svg><div class="t" style="left:1612px;top:140px;color:#000;font-size:11px;">Camera</div><div style="left:1662px;top:140px;width:1px;height:11px;background:#222;"></div><svg style="position:absolute;left:1671px;top:135px;" width="18" height="18" viewBox="0 0 18 18"><circle cx="9" cy="9" r="8.5" fill="#8c8c8c"/><circle cx="7" cy="6" r="2.6" fill="none" stroke="#aaa"/><circle cx="11.5" cy="6" r="2.6" fill="none" stroke="#aaa"/><rect x="4.5" y="9" width="8" height="5" fill="none" stroke="#aaa"/></svg><svg style="position:absolute;left:1829px;top:139px;" width="14" height="10" viewBox="0 0 14 10"><path d="M1 5 C4 0.5 10 0.5 13 5 C10 9.5 4 9.5 1 5 Z" fill="#fff" stroke="#222" stroke-width="0.8"/><circle cx="7" cy="5" r="2.3" fill="#111"/></svg><svg style="position:absolute;left:1851px;top:137px;" width="12" height="14" viewBox="0 0 12 14"><path d="M2 1 L2 11 L4.5 8.5 L7 13 L8.6 12.2 L6.3 7.8 L10 7.8 Z" fill="#fff" stroke="#111" stroke-width="0.9"/></svg><svg style="position:absolute;left:1869px;top:138px;" width="14" height="13" viewBox="0 0 14 13"><rect x="1" y="3" width="12" height="9" rx="1" fill="#ddd" stroke="#111" stroke-width="1"/><rect x="3" y="1" width="4" height="2.5" fill="#ddd" stroke="#111" stroke-width="0.8"/><circle cx="7" cy="7.5" r="2.6" fill="#333" stroke="#111"/><circle cx="7" cy="7.5" r="1" fill="#e04060"/></svg><svg style="position:absolute;left:1574px;top:159px;" width="11" height="11" viewBox="0 0 11 11"><circle cx="5.5" cy="5.5" r="4.6" fill="none" stroke="#111" stroke-width="1.1"/><path d="M3 5.5 H8 M5.5 3 V8" stroke="#111" stroke-width="1.2"/></svg><div style="left:1585px;top:164px;width:7px;height:1px;background:#333;"></div><svg style="position:absolute;left:1594px;top:157px;" width="14" height="14" viewBox="0 0 14 14"><path d="M1.5 2 L12.5 2 L7 12.5 Z" fill="none" stroke="#3a2a10" stroke-width="3"/><path d="M1.5 2 L12.5 2 L7 12.5 Z" fill="none" stroke="#f0a030" stroke-width="1.6"/></svg><div class="t" style="left:1612px;top:160px;color:#000;font-size:11px;">Cube</div><div style="left:1646px;top:160px;width:1px;height:11px;background:#222;"></div><svg style="position:absolute;left:1656px;top:158px;" width="14" height="14" viewBox="0 0 14 14"><path d="M2 2 L12 2 L7 11.5 Z" fill="none" stroke="#555" stroke-width="1"/><circle cx="2" cy="2" r="1.3" fill="#ddd" stroke="#333" stroke-width="0.6"/><circle cx="12" cy="2" r="1.3" fill="#ddd" stroke="#333" stroke-width="0.6"/><circle cx="7" cy="11.5" r="1.3" fill="#ddd" stroke="#333" stroke-width="0.6"/></svg><svg style="position:absolute;left:1676px;top:157px;" width="14" height="14" viewBox="0 0 14 14"><path d="M2 12 L8 6" stroke="#1a2a50" stroke-width="3.4" stroke-linecap="round"/><path d="M2 12 L8 6" stroke="#7aa0e0" stroke-width="1.8" stroke-linecap="round"/><circle cx="9.5" cy="4.5" r="3.2" fill="#7aa0e0" stroke="#1a2a50" stroke-width="0.9"/><path d="M9 1 L12 4" stroke="#727272" stroke-width="2"/></svg><svg style="position:absolute;left:1829px;top:159px;" width="14" height="10" viewBox="0 0 14 10"><path d="M1 5 C4 2 10 2 13 5 C10 8 4 8 1 5 Z" fill="#6a6a6a"/></svg><svg style="position:absolute;left:1851px;top:157px;" width="12" height="14" viewBox="0 0 12 14"><path d="M2 1 L2 11 L4.5 8.5 L7 13 L8.6 12.2 L6.3 7.8 L10 7.8 Z" fill="#fff" stroke="#111" stroke-width="0.9"/></svg><svg style="position:absolute;left:1869px;top:158px;" width="14" height="13" viewBox="0 0 14 13"><rect x="1" y="3" width="12" height="9" rx="1" fill="#ddd" stroke="#111" stroke-width="1"/><rect x="3" y="1" width="4" height="2.5" fill="#ddd" stroke="#111" stroke-width="0.8"/><circle cx="7" cy="7.5" r="2.6" fill="#333" stroke="#111"/><circle cx="7" cy="7.5" r="1" fill="#e04060"/></svg><svg style="position:absolute;left:1574px;top:179px;" width="11" height="11" viewBox="0 0 11 11"><circle cx="5.5" cy="5.5" r="4.6" fill="none" stroke="#111" stroke-width="1.1"/><path d="M3 5.5 H8 M5.5 3 V8" stroke="#111" stroke-width="1.2"/></svg><div style="left:1585px;top:184px;width:7px;height:1px;background:#333;"></div><svg style="position:absolute;left:1594px;top:177px;" width="14" height="14" viewBox="0 0 14 14"><path d="M1.5 2 L12.5 2 L7 12.5 Z" fill="none" stroke="#3a2a10" stroke-width="3"/><path d="M1.5 2 L12.5 2 L7 12.5 Z" fill="none" stroke="#f0a030" stroke-width="1.6"/></svg><div class="t" style="left:1612px;top:180px;color:#000;font-size:11px;">Cylinder</div><div style="left:1662px;top:180px;width:1px;height:11px;background:#222;"></div><svg style="position:absolute;left:1672px;top:178px;" width="14" height="14" viewBox="0 0 14 14"><path d="M2 2 L12 2 L7 11.5 Z" fill="none" stroke="#555" stroke-width="1"/><circle cx="2" cy="2" r="1.3" fill="#ddd" stroke="#333" stroke-width="0.6"/><circle cx="12" cy="2" r="1.3" fill="#ddd" stroke="#333" stroke-width="0.6"/><circle cx="7" cy="11.5" r="1.3" fill="#ddd" stroke="#333" stroke-width="0.6"/></svg><svg style="position:absolute;left:1692px;top:177px;" width="14" height="14" viewBox="0 0 14 14"><path d="M2 12 L8 6" stroke="#1a2a50" stroke-width="3.4" stroke-linecap="round"/><path d="M2 12 L8 6" stroke="#7aa0e0" stroke-width="1.8" stroke-linecap="round"/><circle cx="9.5" cy="4.5" r="3.2" fill="#7aa0e0" stroke="#1a2a50" stroke-width="0.9"/><path d="M9 1 L12 4" stroke="#727272" stroke-width="2"/></svg><svg style="position:absolute;left:1829px;top:179px;" width="14" height="10" viewBox="0 0 14 10"><path d="M1 5 C4 2 10 2 13 5 C10 8 4 8 1 5 Z" fill="#6a6a6a"/></svg><svg style="position:absolute;left:1851px;top:177px;" width="12" height="14" viewBox="0 0 12 14"><path d="M2 1 L2 11 L4.5 8.5 L7 13 L8.6 12.2 L6.3 7.8 L10 7.8 Z" fill="#fff" stroke="#111" stroke-width="0.9"/></svg><svg style="position:absolute;left:1869px;top:178px;" width="14" height="13" viewBox="0 0 14 13"><rect x="1" y="3" width="12" height="9" rx="1" fill="#ddd" stroke="#111" stroke-width="1"/><rect x="3" y="1" width="4" height="2.5" fill="#ddd" stroke="#111" stroke-width="0.8"/><circle cx="7" cy="7.5" r="2.6" fill="#333" stroke="#111"/><circle cx="7" cy="7.5" r="1" fill="#e04060"/></svg><svg style="position:absolute;left:1574px;top:199px;" width="11" height="11" viewBox="0 0 11 11"><circle cx="5.5" cy="5.5" r="4.6" fill="none" stroke="#111" stroke-width="1.1"/><path d="M3 5.5 H8 M5.5 3 V8" stroke="#111" stroke-width="1.2"/></svg><div style="left:1585px;top:204px;width:7px;height:1px;background:#333;"></div><svg style="position:absolute;left:1595px;top:196px;" width="12" height="16" viewBox="0 0 12 16"><circle cx="6" cy="5.5" r="4.3" fill="#f8e8c0" stroke="#553" stroke-width="1"/><rect x="3.5" y="9.5" width="5" height="4" fill="#f0a030" stroke="#332" stroke-width="0.8"/></svg><div class="t" style="left:1612px;top:200px;color:#000;font-size:11px;">Lamp</div><div style="left:1650px;top:200px;width:1px;height:11px;background:#222;"></div><svg style="position:absolute;left:1660px;top:197px;" width="14" height="14" viewBox="0 0 14 14"><circle cx="7" cy="7" r="3.8" fill="#e8e070" stroke="#776" stroke-width="0.8"/><path d="M7 0.5V2.5M7 11.5V13.5M0.5 7H2.5M11.5 7H13.5M2.4 2.4L3.8 3.8M10.2 10.2L11.6 11.6M2.4 11.6L3.8 10.2M10.2 3.8L11.6 2.4" stroke="#cc6" stroke-width="1"/></svg><svg style="position:absolute;left:1829px;top:199px;" width="14" height="10" viewBox="0 0 14 10"><path d="M1 5 C4 0.5 10 0.5 13 5 C10 9.5 4 9.5 1 5 Z" fill="#fff" stroke="#222" stroke-width="0.8"/><circle cx="7" cy="5" r="2.3" fill="#111"/></svg><svg style="position:absolute;left:1851px;top:197px;" width="12" height="14" viewBox="0 0 12 14"><path d="M2 1 L2 11 L4.5 8.5 L7 13 L8.6 12.2 L6.3 7.8 L10 7.8 Z" fill="#fff" stroke="#111" stroke-width="0.9"/></svg><svg style="position:absolute;left:1869px;top:198px;" width="14" height="13" viewBox="0 0 14 13"><rect x="1" y="3" width="12" height="9" rx="1" fill="#ddd" stroke="#111" stroke-width="1"/><rect x="3" y="1" width="4" height="2.5" fill="#ddd" stroke="#111" stroke-width="0.8"/><circle cx="7" cy="7.5" r="2.6" fill="#333" stroke="#111"/><circle cx="7" cy="7.5" r="1" fill="#e04060"/></svg><div style="left:1594px;top:214px;width:13px;height:5px;background:#f0a030;"></div><div style="left:1551px;top:220px;width:351px;height:27px;background:#727272;"></div><div style="left:1551px;top:247px;width:351px;height:873px;background:#727272;"></div><div style="left:1551px;top:247px;width:351px;height:1px;background:#6a6a6a;"></div><div style="left:1560px;top:224px;width:30px;height:20px;box-sizing:border-box;border:1px solid #111;border-radius:5px 5px 5px 5px;background:linear-gradient(#555555,#383838);"></div><svg style="position:absolute;left:1564px;top:228px;" width="15" height="12" viewBox="0 0 15 12"><rect x="1" y="1" width="11" height="4" rx="2" fill="#eee" stroke="#111" stroke-width="0.8"/><rect x="1" y="7" width="11" height="4" rx="2" fill="#eee" stroke="#111" stroke-width="0.8"/><rect x="6" y="1.8" width="5" height="2.5" fill="#333"/><rect x="2" y="7.8" width="5" height="2.5" fill="#333"/></svg><svg style="position:absolute;left:1581px;top:228px;" width="7" height="12" viewBox="0 0 7 12"><path d="M0.5 5 L3.5 0.5 L6.5 5 Z M0.5 7 L3.5 11.5 L6.5 7 Z" fill="#cfcfcf"/></svg><div style="left:1598px;top:224px;width:240px;height:20px;box-sizing:border-box;border:1px solid #111;border-radius:5px 5px 5px 5px;background:linear-gradient(#555555,#383838);"></div><div style="left:1618px;top:225px;width:1px;height:18px;background:#222;"></div><div style="left:1638px;top:225px;width:1px;height:18px;background:#222;"></div><div style="left:1658px;top:225px;width:1px;height:18px;background:#222;"></div><div style="left:1678px;top:225px;width:1px;height:18px;background:#222;"></div><div style="left:1698px;top:225px;width:1px;height:18px;background:#222;"></div><div style="left:1718px;top:225px;width:1px;height:18px;background:#222;"></div><div style="left:1738px;top:225px;width:1px;height:18px;background:#222;"></div><div style="left:1758px;top:225px;width:1px;height:18px;background:#222;"></div><div style="left:1778px;top:225px;width:1px;height:18px;background:#222;"></div><div style="left:1798px;top:225px;width:1px;height:18px;background:#222;"></div><div style="left:1818px;top:225px;width:1px;height:18px;background:#222;"></div><div style="left:1758px;top:224px;width:20px;height:20px;box-sizing:border-box;border:1px solid #111;border-radius:0px 0px 0px 0px;background:linear-gradient(#6690d0,#4a72b2);"></div><svg style="position:absolute;left:1600px;top:226px;" width="16" height="16" viewBox="0 0 16 16"><rect x="2" y="4" width="12" height="9" rx="1" fill="#ccc" stroke="#222"/><circle cx="8" cy="8.5" r="2.6" fill="#555" stroke="#111"/><rect x="3" y="2" width="4" height="2" fill="#bbb"/></svg><svg style="position:absolute;left:1620px;top:226px;" width="16" height="16" viewBox="0 0 16 16"><rect x="4" y="4" width="10" height="10" fill="#ccc" stroke="#333" stroke-width="0.8"/><rect x="2" y="2" width="9" height="9" fill="#dde4f0" stroke="#222" stroke-width="0.8"/><path d="M5 8 L6.5 4 L8 6" stroke="#3060c0" stroke-width="1.2" fill="none"/></svg><svg style="position:absolute;left:1640px;top:226px;" width="16" height="16" viewBox="0 0 16 16"><circle cx="4" cy="3" r="1.5" fill="#b0b050"/><rect x="8" y="3" width="5" height="8" rx="2" fill="#6a8ac0" stroke="#223" stroke-width="0.7"/><circle cx="6" cy="11" r="3" fill="#999" stroke="#333" stroke-width="0.7"/></svg><svg style="position:absolute;left:1660px;top:226px;" width="16" height="16" viewBox="0 0 16 16"><circle cx="8" cy="8" r="6" fill="#4a78a8" stroke="#223" stroke-width="0.8"/><path d="M4 6 C6 5 7 8 5 10 Z M9 3 C12 5 12 8 10 10 Z" fill="#5a9a5a"/></svg><svg style="position:absolute;left:1680px;top:226px;" width="16" height="16" viewBox="0 0 16 16"><path d="M8 2 L14 5 L14 11 L8 14 L2 11 L2 5 Z" fill="#c08850" stroke="#333" stroke-width="0.8"/><path d="M2 5 L8 2 L14 5 L8 8 Z" fill="#e0b080"/></svg><svg style="position:absolute;left:1700px;top:226px;" width="16" height="16" viewBox="0 0 16 16"><path d="M3 10 C1 8 3 5 5 6 L7 8 M13 6 C15 8 13 11 11 10 L9 8 M5 11 L11 5" stroke="#bbb" stroke-width="1.6" fill="none"/></svg><svg style="position:absolute;left:1720px;top:226px;" width="16" height="16" viewBox="0 0 16 16"><path d="M3 13 L9 7" stroke="#7aa0e0" stroke-width="2.2" stroke-linecap="round"/><circle cx="10.5" cy="5.5" r="3.3" fill="#7aa0e0"/><path d="M10 1.5 L13 4.5" stroke="#464646" stroke-width="2"/></svg><svg style="position:absolute;left:1740px;top:226px;" width="16" height="16" viewBox="0 0 16 16"><path d="M3 3 L13 3 L8 13 Z" fill="none" stroke="#999" stroke-width="1"/><circle cx="3" cy="3" r="1.3" fill="#ccc"/><circle cx="13" cy="3" r="1.3" fill="#ccc"/><circle cx="8" cy="13" r="1.3" fill="#ccc"/></svg><svg style="position:absolute;left:1760px;top:226px;" width="16" height="16" viewBox="0 0 16 16"><circle cx="8" cy="8" r="6" fill="#eee" stroke="#222" stroke-width="1"/><path d="M8 8 L8 2 A6 6 0 0 1 14 8 Z M8 8 L2 8 A6 6 0 0 0 8 14 Z" fill="#c04030"/></svg><svg style="position:absolute;left:1780px;top:226px;" width="16" height="16" viewBox="0 0 16 16"><rect x="2" y="2" width="12" height="12" fill="#e8d8d8"/><path d="M2 2h3v3h-3z M8 2h3v3h-3z M5 5h3v3h-3z M11 5h3v3h-3z M2 8h3v3h-3z M8 8h3v3h-3z M5 11h3v3h-3z M11 11h3v3h-3z" fill="#902828"/></svg><svg style="position:absolute;left:1800px;top:226px;" width="16" height="16" viewBox="0 0 16 16"><path d="M4 1 V7 M1 4 H7 M11 5 V13 M7 9 H15 M5 10 V15 M2.5 12.5 H7.5" stroke="#e8d8a0" stroke-width="1.2"/></svg><svg style="position:absolute;left:1820px;top:226px;" width="16" height="16" viewBox="0 0 16 16"><path d="M2 8 L6 12 L13 4" stroke="#4a70b0" stroke-width="2.4" fill="none"/><circle cx="12" cy="4" r="2.6" fill="#ccc"/></svg><svg style="position:absolute;left:1561px;top:257px;" width="16" height="16" viewBox="0 0 16 16"><path d="M2 14 L7 9" stroke="#111" stroke-width="2"/><path d="M2 14 L7 9" stroke="#ddd" stroke-width="1"/><path d="M6 5 L11 10 L13 8 L11 6 L13 3 L10 0 L8 3 Z" fill="#e8e8e8" stroke="#111" stroke-width="0.9"/></svg><svg style="position:absolute;left:1583px;top:257px;" width="16" height="16" viewBox="0 0 16 16"><circle cx="3.5" cy="2.5" r="1.6" fill="#e8e070"/><rect x="8" y="2.5" width="5" height="9" rx="2" fill="#6a90d0" stroke="#223" stroke-width="0.8"/><circle cx="6" cy="11" r="3.4" fill="#eee" stroke="#333" stroke-width="0.8"/></svg><svg style="position:absolute;left:1605px;top:261px;" width="5" height="8" viewBox="0 0 5 8"><path d="M1 0.5 L4.5 4 L1 7.5 Z" fill="#222"/></svg><svg style="position:absolute;left:1624px;top:258px;" width="14" height="14" viewBox="0 0 14 14"><path d="M7 1 L13 4 L13 10 L7 13 L1 10 L1 4 Z" fill="#e8a050" stroke="#333" stroke-width="0.8"/><path d="M1 4 L7 1 L13 4 L7 7 Z" fill="#f6c690"/><path d="M7 7 V13" stroke="#c07830" stroke-width="0.8"/></svg><div class="t" style="left:1643px;top:261px;color:#000;font-size:11px;">Plane.001</div><svg style="position:absolute;left:1710px;top:261px;" width="5" height="8" viewBox="0 0 5 8"><path d="M1 0.5 L4.5 4 L1 7.5 Z" fill="#222"/></svg><div style="left:1559px;top:291px;width:307px;height:163px;box-sizing:border-box;border:1px solid #3a3a3a;border-radius:5px 5px 5px 5px;background:#808080;"></div><svg style="position:absolute;left:1569px;top:437px;" width="10" height="10" viewBox="0 0 10 10"><circle cx="5" cy="5" r="4" fill="none" stroke="#555" stroke-width="1"/><path d="M3 5 H7 M5 3 V7" stroke="#555" stroke-width="1"/></svg><div style="left:1714px;top:441px;width:14px;height:1px;background:#2a2a2a;"></div><div style="left:1714px;top:444px;width:14px;height:1px;background:#2a2a2a;"></div><div style="left:1873px;top:292px;width:20px;height:19px;box-sizing:border-box;border:1px solid #191919;border-radius:5px 5px 0px 0px;background:linear-gradient(#b0b0b0,#898989);"></div><svg style="position:absolute;left:1877px;top:295px;" width="12" height="12" viewBox="0 0 12 12"><path d="M4.5 0.5h3v4h4v3h-4v4h-3v-4h-4v-3h4z" fill="#fff" stroke="#222" stroke-width="1"/></svg><div style="left:1873px;top:310px;width:20px;height:21px;box-sizing:border-box;border:1px solid #191919;border-radius:0px 0px 0px 0px;background:linear-gradient(#b0b0b0,#898989);"></div><svg style="position:absolute;left:1877px;top:317px;" width="12" height="6" viewBox="0 0 12 6"><rect x="0.5" y="1" width="11" height="3.5" fill="#fff" stroke="#222" stroke-width="1"/></svg><div style="left:1873px;top:330px;width:20px;height:21px;box-sizing:border-box;border:1px solid #111;border-radius:0px 0px 5px 5px;background:linear-gradient(#555555,#383838);"></div><svg style="position:absolute;left:1878px;top:334px;" width="10" height="12" viewBox="0 0 10 12"><path d="M1 1 L9 1 L6 10 Z" fill="#111" stroke="#ccc" stroke-width="0.8"/></svg><div style="left:1559px;top:459px;width:32px;height:20px;box-sizing:border-box;border:1px solid #111;border-radius:5px 0px 0px 5px;background:linear-gradient(#555555,#383838);"></div><svg style="position:absolute;left:1563px;top:462px;" width="14" height="14" viewBox="0 0 14 14"><circle cx="7" cy="7" r="6" fill="#eee" stroke="#222" stroke-width="1"/><path d="M7 7 L7 1 A6 6 0 0 1 13 7 Z M7 7 L1 7 A6 6 0 0 0 7 13 Z" fill="#c04030"/></svg><svg style="position:absolute;left:1581px;top:463px;" width="7" height="12" viewBox="0 0 7 12"><path d="M0.5 5 L3.5 0.5 L6.5 5 Z M0.5 7 L3.5 11.5 L6.5 7 Z" fill="#cfcfcf"/></svg><div style="left:1590px;top:459px;width:180px;height:20px;box-sizing:border-box;border:1px solid #191919;border-radius:0px 5px 5px 0px;background:linear-gradient(#b0b0b0,#898989);"></div><svg style="position:absolute;left:1596px;top:463px;" width="12" height="12" viewBox="0 0 12 12"><path d="M4.5 0.5h3v4h4v3h-4v4h-3v-4h-4v-3h4z" fill="#fff" stroke="#222" stroke-width="1"/></svg><div class="t" style="left:1487px;width:400px;text-align:center;top:464px;color:#000;font-size:11px;">New</div><div style="left:0px;top:993px;width:1549px;height:26px;background:#727272;"></div><div style="left:0px;top:1019px;width:1549px;height:1px;background:#000;"></div><div style="left:7px;top:996px;width:30px;height:20px;box-sizing:border-box;border:1px solid #111;border-radius:5px 5px 5px 5px;background:linear-gradient(#555555,#383838);"></div><svg style="position:absolute;left:11px;top:998px;" width="16" height="16" viewBox="0 0 16 16"><path d="M8 1.5 L14 4 L14 11.5 L8 14.5 L2 11.5 L2 4 Z" fill="#ddd" stroke="#222" stroke-width="1"/><path d="M2 4 L8 6.5 L14 4 M8 6.5 V14.5" stroke="#222" stroke-width="0.8" fill="none"/><path d="M2 4 L8 1.5 L14 4 L8 6.5 Z" fill="#f4f4f4"/></svg><svg style="position:absolute;left:27px;top:1000px;" width="7" height="12" viewBox="0 0 7 12"><path d="M0.5 5 L3.5 0.5 L6.5 5 Z M0.5 7 L3.5 11.5 L6.5 7 Z" fill="#cfcfcf"/></svg><div class="t" style="left:50px;top:1001px;color:#000;font-size:11px;">View</div><div class="t" style="left:94px;top:1001px;color:#000;font-size:11px;">Select</div><div class="t" style="left:145px;top:1001px;color:#000;font-size:11px;">Add</div><div class="t" style="left:184px;top:1001px;color:#000;font-size:11px;">Object</div><div style="left:230px;top:996px;width:113px;height:20px;box-sizing:border-box;border:1px solid #111;border-radius:5px 5px 5px 5px;background:linear-gradient(#555555,#383838);"></div><svg style="position:absolute;left:235px;top:999px;" width="14" height="14" viewBox="0 0 14 14"><path d="M7 1 L13 4 L13 10 L7 13 L1 10 L1 4 Z" fill="#e8a050" stroke="#333" stroke-width="0.8"/><path d="M1 4 L7 1 L13 4 L7 7 Z" fill="#f6c690"/><path d="M7 7 V13" stroke="#c07830" stroke-width="0.8"/></svg><div class="t" style="left:254px;top:1001px;color:#fff;font-size:11px;">Object Mode</div><svg style="position:absolute;left:333px;top:1000px;" width="7" height="12" viewBox="0 0 7 12"><path d="M0.5 5 L3.5 0.5 L6.5 5 Z M0.5 7 L3.5 11.5 L6.5 7 Z" fill="#cfcfcf"/></svg><div style="left:348px;top:996px;width:35px;height:20px;box-sizing:border-box;border:1px solid #111;border-radius:5px 5px 5px 5px;background:linear-gradient(#555555,#383838);"></div><svg style="position:absolute;left:352px;top:999px;" width="14" height="14" viewBox="0 0 14 14"><circle cx="7" cy="7" r="6" fill="#eee" stroke="#222" stroke-width="1"/><path d="M7 7 L7 1 A6 6 0 0 1 13 7 Z M7 7 L1 7 A6 6 0 0 0 7 13 Z" fill="#b04838"/></svg><svg style="position:absolute;left:372px;top:1000px;" width="7" height="12" viewBox="0 0 7 12"><path d="M0.5 5 L3.5 0.5 L6.5 5 Z M0.5 7 L3.5 11.5 L6.5 7 Z" fill="#cfcfcf"/></svg><div style="left:388px;top:996px;width:35px;height:20px;box-sizing:border-box;border:1px solid #111;border-radius:5px 0px 0px 5px;background:linear-gradient(#555555,#383838);"></div><svg style="position:absolute;left:392px;top:999px;" width="14" height="14" viewBox="0 0 14 14"><circle cx="5" cy="5" r="4" fill="#eee" stroke="#222" stroke-width="0.8"/><circle cx="9" cy="9" r="4" fill="#eee" stroke="#222" stroke-width="0.8"/><rect x="5" y="5" width="4" height="4" fill="none" stroke="#3a70c0" stroke-width="1.2"/></svg><svg style="position:absolute;left:412px;top:1000px;" width="7" height="12" viewBox="0 0 7 12"><path d="M0.5 5 L3.5 0.5 L6.5 5 Z M0.5 7 L3.5 11.5 L6.5 7 Z" fill="#cfcfcf"/></svg><div style="left:422px;top:996px;width:20px;height:20px;box-sizing:border-box;border:1px solid #191919;border-radius:0px 5px 5px 0px;background:linear-gradient(#b0b0b0,#898989);"></div><svg style="position:absolute;left:424px;top:998px;" width="16" height="16" viewBox="0 0 16 16"><circle cx="3.5" cy="3" r="1.6" fill="none" stroke="#2a4a80" stroke-width="1"/><circle cx="8" cy="3" r="1.6" fill="none" stroke="#2a4a80" stroke-width="1"/><circle cx="12.5" cy="3" r="1.6" fill="none" stroke="#2a4a80" stroke-width="1"/><path d="M1.5 10 H14.5 M1.5 10 L4 7.5 M1.5 10 L4 12.5 M14.5 10 L12 7.5 M14.5 10 L12 12.5" stroke="#111" stroke-width="2.4" fill="none"/><path d="M1.5 10 H14.5 M1.5 10 L4 7.5 M1.5 10 L4 12.5 M14.5 10 L12 7.5 M14.5 10 L12 12.5" stroke="#fff" stroke-width="1" fill="none"/></svg><div style="left:449px;top:996px;width:151px;height:20px;box-sizing:border-box;border:1px solid #111;border-radius:5px 5px 5px 5px;background:linear-gradient(#555555,#383838);"></div><div style="left:468px;top:996px;width:20px;height:20px;box-sizing:border-box;border:1px solid #111;border-radius:0px 0px 0px 0px;background:linear-gradient(#6690d0,#4a72b2);"></div><div style="left:468px;top:997px;width:1px;height:18px;background:#222;"></div><div style="left:487px;top:997px;width:1px;height:18px;background:#222;"></div><div style="left:507px;top:997px;width:1px;height:18px;background:#222;"></div><div style="left:527px;top:997px;width:1px;height:18px;background:#222;"></div><svg style="position:absolute;left:451px;top:998px;" width="16" height="16" viewBox="0 0 16 16"><path d="M8 2 V9 L2 14 M8 9 L14 14" fill="none" stroke="#111" stroke-width="2.6"/><path d="M8 2 V9" stroke="#5a7ad0" stroke-width="1.4"/><path d="M8 9 L2 14" stroke="#d04040" stroke-width="1.4"/><path d="M8 9 L14 14" stroke="#60c040" stroke-width="1.4"/></svg><svg style="position:absolute;left:470px;top:998px;" width="16" height="16" viewBox="0 0 16 16"><path d="M2 14 L11 5" stroke="#112" stroke-width="2.6"/><path d="M2 14 L11 5" stroke="#c8e0ff" stroke-width="1.3"/><path d="M14 2 L7 4 L12 9 Z" fill="#c8e0ff" stroke="#112" stroke-width="0.8"/></svg><svg style="position:absolute;left:490px;top:998px;" width="16" height="16" viewBox="0 0 16 16"><path d="M3 14 C3 8 7 3 13 3" fill="none" stroke="#112" stroke-width="2.6"/><path d="M3 14 C3 8 7 3 13 3" fill="none" stroke="#5a7ab8" stroke-width="1.4"/></svg><svg style="position:absolute;left:510px;top:998px;" width="16" height="16" viewBox="0 0 16 16"><path d="M2 14 L10 6" stroke="#112" stroke-width="2.6"/><path d="M2 14 L10 6" stroke="#5a7ab8" stroke-width="1.4"/><rect x="8" y="2" width="6" height="6" fill="#5a7ab8" stroke="#112" stroke-width="0.8"/></svg><div class="t" style="left:535px;top:1001px;color:#fff;font-size:11px;">Global</div><svg style="position:absolute;left:590px;top:1000px;" width="7" height="12" viewBox="0 0 7 12"><path d="M0.5 5 L3.5 0.5 L6.5 5 Z M0.5 7 L3.5 11.5 L6.5 7 Z" fill="#cfcfcf"/></svg><div style="left:605px;top:996px;width:50px;height:20px;box-sizing:border-box;border:1px solid #2a2a2a;border-radius:5px 5px 5px 5px;background:linear-gradient(#a4a4a4,#8c8c8c);"></div><div style="left:615px;top:997px;width:1px;height:18px;background:#3a3a3a;"></div><div style="left:625px;top:997px;width:1px;height:18px;background:#3a3a3a;"></div><div style="left:635px;top:997px;width:1px;height:18px;background:#3a3a3a;"></div><div style="left:645px;top:997px;width:1px;height:18px;background:#3a3a3a;"></div><div style="left:606px;top:1006px;width:48px;height:1px;background:#3a3a3a;"></div><div style="left:660px;top:996px;width:50px;height:20px;box-sizing:border-box;border:1px solid #2a2a2a;border-radius:5px 5px 5px 5px;background:linear-gradient(#a4a4a4,#8c8c8c);"></div><div style="left:670px;top:997px;width:1px;height:18px;background:#3a3a3a;"></div><div style="left:680px;top:997px;width:1px;height:18px;background:#3a3a3a;"></div><div style="left:690px;top:997px;width:1px;height:18px;background:#3a3a3a;"></div><div style="left:700px;top:997px;width:1px;height:18px;background:#3a3a3a;"></div><div style="left:661px;top:1006px;width:48px;height:1px;background:#3a3a3a;"></div><div style="left:605px;top:996px;width:11px;height:11px;box-sizing:border-box;border:1px solid #2a2a2a;border-radius:5px 0px 0px 0px;background:#5a5a5a;"></div><svg style="position:absolute;left:607px;top:998px;" width="6" height="6" viewBox="0 0 6 6"><circle cx="3" cy="3" r="2.3" fill="#f0a040" stroke="#222" stroke-width="0.6"/></svg><div style="left:715px;top:996px;width:20px;height:20px;box-sizing:border-box;border:1px solid #111;border-radius:5px 5px 5px 5px;background:linear-gradient(#555555,#383838);"></div><svg style="position:absolute;left:717px;top:998px;" width="16" height="16" viewBox="0 0 16 16"><rect x="2" y="2" width="8" height="11" fill="#ccc" stroke="#222" stroke-width="0.9"/><path d="M11 6 C14 6 14 9 11 9 M11 9 C14 9 14 13 11 13" fill="none" stroke="#fff" stroke-width="1.4"/></svg><div style="left:740px;top:996px;width:20px;height:20px;box-sizing:border-box;border:1px solid #191919;border-radius:5px 5px 5px 5px;background:linear-gradient(#b0b0b0,#898989);"></div><svg style="position:absolute;left:742px;top:998px;" width="16" height="16" viewBox="0 0 16 16"><circle cx="8" cy="8" r="5.5" fill="none" stroke="#8a8a8a" stroke-width="1.2"/><circle cx="8" cy="8" r="2.5" fill="none" stroke="#8a8a8a" stroke-width="1.2"/></svg><div style="left:765px;top:996px;width:20px;height:20px;box-sizing:border-box;border:1px solid #191919;border-radius:5px 0px 0px 5px;background:linear-gradient(#b0b0b0,#898989);"></div><svg style="position:absolute;left:767px;top:998px;" width="16" height="16" viewBox="0 0 16 16"><g transform="rotate(45 8 8)"><path d="M4.5 14 V8 A3.5 3.5 0 0 1 11.5 8 V14" fill="none" stroke="#555" stroke-width="3.2"/><path d="M4.5 14 V8 A3.5 3.5 0 0 1 11.5 8 V14" fill="none" stroke="#a8a8a8" stroke-width="1.6"/></g></svg><div style="left:784px;top:996px;width:36px;height:20px;box-sizing:border-box;border:1px solid #111;border-radius:0px 5px 5px 0px;background:linear-gradient(#555555,#383838);"></div><svg style="position:absolute;left:787px;top:998px;" width="16" height="16" viewBox="0 0 16 16"><path d="M5 3 V15 M11 3 V15 M1 7 H15 M1 12 H15" stroke="#fff" stroke-width="1.2"/><circle cx="5" cy="4.5" r="3" fill="#9ac0f0" stroke="#224" stroke-width="0.8"/><circle cx="5" cy="4.5" r="1" fill="#224"/></svg><svg style="position:absolute;left:809px;top:1000px;" width="7" height="12" viewBox="0 0 7 12"><path d="M0.5 5 L3.5 0.5 L6.5 5 Z M0.5 7 L3.5 11.5 L6.5 7 Z" fill="#cfcfcf"/></svg><div style="left:826px;top:996px;width:20px;height:20px;box-sizing:border-box;border:1px solid #191919;border-radius:5px 0px 0px 5px;background:linear-gradient(#b0b0b0,#898989);"></div><svg style="position:absolute;left:828px;top:998px;" width="16" height="16" viewBox="0 0 16 16"><rect x="1" y="5" width="13" height="9" rx="1" fill="#ccc" stroke="#222"/><circle cx="7.5" cy="9.5" r="2.8" fill="#444" stroke="#111"/><circle cx="7.5" cy="9.5" r="1" fill="#c03050"/><path d="M13 0.5 V5 M10.8 2.8 H15.2" stroke="#f0e060" stroke-width="1.2"/></svg><div style="left:845px;top:996px;width:20px;height:20px;box-sizing:border-box;border:1px solid #191919;border-radius:0px 5px 5px 0px;background:linear-gradient(#b0b0b0,#898989);"></div><svg style="position:absolute;left:847px;top:998px;" width="16" height="16" viewBox="0 0 16 16"><rect x="1" y="7" width="14" height="8" fill="#333" stroke="#111"/><path d="M1 7 L14 2 L15 5 L2 9 Z" fill="#eee" stroke="#111" stroke-width="0.8"/><path d="M4 6 L6 3.8 M8 5 L10 2.8" stroke="#111" stroke-width="1.2"/></svg><div style="left:0px;top:1020px;width:1549px;height:58px;background:#727272;"></div><div style="left:0px;top:1020px;width:266px;height:58px;background:#434343;"></div><div style="left:1398px;top:1020px;width:151px;height:58px;background:#434343;"></div><div style="left:1398px;top:1020px;width:1px;height:58px;background:#383838;"></div><div style="left:12px;top:1020px;width:1px;height:58px;background:#404040;"></div><div style="left:34px;top:1020px;width:1px;height:58px;background:#3c3c3c;"></div><div style="left:57px;top:1020px;width:1px;height:58px;background:#404040;"></div><div style="left:80px;top:1020px;width:1px;height:58px;background:#3c3c3c;"></div><div style="left:102px;top:1020px;width:1px;height:58px;background:#404040;"></div><div style="left:125px;top:1020px;width:1px;height:58px;background:#3c3c3c;"></div><div style="left:148px;top:1020px;width:1px;height:58px;background:#404040;"></div><div style="left:171px;top:1020px;width:1px;height:58px;background:#3c3c3c;"></div><div style="left:193px;top:1020px;width:1px;height:58px;background:#404040;"></div><div style="left:216px;top:1020px;width:1px;height:58px;background:#3c3c3c;"></div><div style="left:239px;top:1020px;width:1px;height:58px;background:#404040;"></div><div style="left:262px;top:1020px;width:1px;height:58px;background:#3c3c3c;"></div><div style="left:284px;top:1020px;width:1px;height:58px;background:#6c6c6c;"></div><div style="left:307px;top:1020px;width:1px;height:58px;background:#666666;"></div><div style="left:330px;top:1020px;width:1px;height:58px;background:#6c6c6c;"></div><div style="left:352px;top:1020px;width:1px;height:58px;background:#666666;"></div><div style="left:375px;top:1020px;width:1px;height:58px;background:#6c6c6c;"></div><div style="left:398px;top:1020px;width:1px;height:58px;background:#666666;"></div><div style="left:421px;top:1020px;width:1px;height:58px;background:#6c6c6c;"></div><div style="left:443px;top:1020px;width:1px;height:58px;background:#666666;"></div><div style="left:466px;top:1020px;width:1px;height:58px;background:#6c6c6c;"></div><div style="left:489px;top:1020px;width:1px;height:58px;background:#666666;"></div><div style="left:511px;top:1020px;width:1px;height:58px;background:#6c6c6c;"></div><div style="left:534px;top:1020px;width:1px;height:58px;background:#666666;"></div><div style="left:557px;top:1020px;width:1px;height:58px;background:#6c6c6c;"></div><div style="left:580px;top:1020px;width:1px;height:58px;background:#666666;"></div><div style="left:602px;top:1020px;width:1px;height:58px;background:#6c6c6c;"></div><div style="left:625px;top:1020px;width:1px;height:58px;background:#666666;"></div><div style="left:648px;top:1020px;width:1px;height:58px;background:#6c6c6c;"></div><div style="left:671px;top:1020px;width:1px;height:58px;background:#666666;"></div><div style="left:693px;top:1020px;width:1px;height:58px;background:#6c6c6c;"></div><div style="left:716px;top:1020px;width:1px;height:58px;background:#666666;"></div><div style="left:739px;top:1020px;width:1px;height:58px;background:#6c6c6c;"></div><div style="left:761px;top:1020px;width:1px;height:58px;background:#666666;"></div><div style="left:784px;top:1020px;width:1px;height:58px;background:#6c6c6c;"></div><div style="left:807px;top:1020px;width:1px;height:58px;background:#666666;"></div><div style="left:830px;top:1020px;width:1px;height:58px;background:#6c6c6c;"></div><div style="left:852px;top:1020px;width:1px;height:58px;background:#666666;"></div><div style="left:875px;top:1020px;width:1px;height:58px;background:#6c6c6c;"></div><div style="left:898px;top:1020px;width:1px;height:58px;background:#666666;"></div><div style="left:921px;top:1020px;width:1px;height:58px;background:#6c6c6c;"></div><div style="left:943px;top:1020px;width:1px;height:58px;background:#666666;"></div><div style="left:966px;top:1020px;width:1px;height:58px;background:#6c6c6c;"></div><div style="left:989px;top:1020px;width:1px;height:58px;background:#666666;"></div><div style="left:1011px;top:1020px;width:1px;height:58px;background:#6c6c6c;"></div><div style="left:1034px;top:1020px;width:1px;height:58px;background:#666666;"></div><div style="left:1057px;top:1020px;width:1px;height:58px;background:#6c6c6c;"></div><div style="left:1080px;top:1020px;width:1px;height:58px;background:#666666;"></div><div style="left:1102px;top:1020px;width:1px;height:58px;background:#6c6c6c;"></div><div style="left:1125px;top:1020px;width:1px;height:58px;background:#666666;"></div><div style="left:1148px;top:1020px;width:1px;height:58px;background:#6c6c6c;"></div><div style="left:1171px;top:1020px;width:1px;height:58px;background:#666666;"></div><div style="left:1193px;top:1020px;width:1px;height:58px;background:#6c6c6c;"></div><div style="left:1216px;top:1020px;width:1px;height:58px;background:#666666;"></div><div style="left:1239px;top:1020px;width:1px;height:58px;background:#6c6c6c;"></div><div style="left:1261px;top:1020px;width:1px;height:58px;background:#666666;"></div><div style="left:1284px;top:1020px;width:1px;height:58px;background:#6c6c6c;"></div><div style="left:1307px;top:1020px;width:1px;height:58px;background:#666666;"></div><div style="left:1330px;top:1020px;width:1px;height:58px;background:#6c6c6c;"></div><div style="left:1352px;top:1020px;width:1px;height:58px;background:#666666;"></div><div style="left:1375px;top:1020px;width:1px;height:58px;background:#6c6c6c;"></div><div style="left:1398px;top:1020px;width:1px;height:58px;background:#666666;"></div><div style="left:1420px;top:1020px;width:1px;height:58px;background:#404040;"></div><div style="left:1443px;top:1020px;width:1px;height:58px;background:#3c3c3c;"></div><div style="left:1466px;top:1020px;width:1px;height:58px;background:#404040;"></div><div style="left:1489px;top:1020px;width:1px;height:58px;background:#3c3c3c;"></div><div style="left:1511px;top:1020px;width:1px;height:58px;background:#404040;"></div><div style="left:1534px;top:1020px;width:1px;height:58px;background:#3c3c3c;"></div><div style="left:260px;top:1020px;width:3px;height:58px;background:#5bc13b;"></div><div style="left:0px;top:1078px;width:1549px;height:15px;background:#727272;"></div><div style="left:2px;top:1079px;width:1545px;height:13px;box-sizing:border-box;border:1px solid #2a2a2a;border-radius:7px 7px 7px 7px;background:linear-gradient(#a8a8a8,#bcbcbc);"></div><svg style="position:absolute;left:6px;top:1082px;" width="9" height="9" viewBox="0 0 9 9"><circle cx="4.5" cy="4.5" r="3.8" fill="#8e8e8e"/></svg><div class="t" style="left:-164px;width:400px;text-align:center;top:1080px;color:#000;font-size:11px;">-50</div><div class="t" style="left:-119px;width:400px;text-align:center;top:1080px;color:#000;font-size:11px;">-40</div><div class="t" style="left:-74px;width:400px;text-align:center;top:1080px;color:#000;font-size:11px;">-30</div><div class="t" style="left:-28px;width:400px;text-align:center;top:1080px;color:#000;font-size:11px;">-20</div><div class="t" style="left:17px;width:400px;text-align:center;top:1080px;color:#000;font-size:11px;">-10</div><div class="t" style="left:62px;width:400px;text-align:center;top:1080px;color:#000;font-size:11px;">0</div><div class="t" style="left:107px;width:400px;text-align:center;top:1080px;color:#000;font-size:11px;">10</div><div class="t" style="left:152px;width:400px;text-align:center;top:1080px;color:#000;font-size:11px;">20</div><div class="t" style="left:198px;width:400px;text-align:center;top:1080px;color:#000;font-size:11px;">30</div><div class="t" style="left:243px;width:400px;text-align:center;top:1080px;color:#000;font-size:11px;">40</div><div class="t" style="left:288px;width:400px;text-align:center;top:1080px;color:#000;font-size:11px;">50</div><div class="t" style="left:334px;width:400px;text-align:center;top:1080px;color:#000;font-size:11px;">60</div><div class="t" style="left:379px;width:400px;text-align:center;top:1080px;color:#000;font-size:11px;">70</div><div class="t" style="left:424px;width:400px;text-align:center;top:1080px;color:#000;font-size:11px;">80</div><div class="t" style="left:469px;width:400px;text-align:center;top:1080px;color:#000;font-size:11px;">90</div><div class="t" style="left:514px;width:400px;text-align:center;top:1080px;color:#000;font-size:11px;">100</div><div class="t" style="left:560px;width:400px;text-align:center;top:1080px;color:#000;font-size:11px;">110</div><div class="t" style="left:605px;width:400px;text-align:center;top:1080px;color:#000;font-size:11px;">120</div><div class="t" style="left:650px;width:400px;text-align:center;top:1080px;color:#000;font-size:11px;">130</div><div class="t" style="left:696px;width:400px;text-align:center;top:1080px;color:#000;font-size:11px;">140</div><div class="t" style="left:741px;width:400px;text-align:center;top:1080px;color:#000;font-size:11px;">150</div><div class="t" style="left:786px;width:400px;text-align:center;top:1080px;color:#000;font-size:11px;">160</div><div class="t" style="left:831px;width:400px;text-align:center;top:1080px;color:#000;font-size:11px;">170</div><div class="t" style="left:876px;width:400px;text-align:center;top:1080px;color:#000;font-size:11px;">180</div><div class="t" style="left:922px;width:400px;text-align:center;top:1080px;color:#000;font-size:11px;">190</div><div class="t" style="left:967px;width:400px;text-align:center;top:1080px;color:#000;font-size:11px;">200</div><div class="t" style="left:1012px;width:400px;text-align:center;top:1080px;color:#000;font-size:11px;">210</div><div class="t" style="left:1058px;width:400px;text-align:center;top:1080px;color:#000;font-size:11px;">220</div><div class="t" style="left:1103px;width:400px;text-align:center;top:1080px;color:#000;font-size:11px;">230</div><div class="t" style="left:1148px;width:400px;text-align:center;top:1080px;color:#000;font-size:11px;">240</div><div class="t" style="left:1193px;width:400px;text-align:center;top:1080px;color:#000;font-size:11px;">250</div><div class="t" style="left:1238px;width:400px;text-align:center;top:1080px;color:#000;font-size:11px;">260</div><div class="t" style="left:1284px;width:400px;text-align:center;top:1080px;color:#000;font-size:11px;">270</div><div class="t" style="left:1329px;width:400px;text-align:center;top:1080px;color:#000;font-size:11px;">280</div><div style="left:0px;top:1093px;width:1549px;height:2px;background:#7e7e7e;"></div><div style="left:0px;top:1095px;width:1549px;height:25px;background:#727272;"></div><div style="left:7px;top:1100px;width:30px;height:19px;box-sizing:border-box;border:1px solid #111;border-radius:5px 5px 5px 5px;background:linear-gradient(#555555,#383838);"></div><svg style="position:absolute;left:11px;top:1102px;" width="15" height="15" viewBox="0 0 15 15"><circle cx="7.5" cy="7.5" r="6.5" fill="#eee" stroke="#222" stroke-width="1"/><path d="M7.5 3 V7.5 L5 10" stroke="#c02020" stroke-width="1.3" fill="none"/></svg><svg style="position:absolute;left:27px;top:1103px;" width="7" height="12" viewBox="0 0 7 12"><path d="M0.5 5 L3.5 0.5 L6.5 5 Z M0.5 7 L3.5 11.5 L6.5 7 Z" fill="#cfcfcf"/></svg><div class="t" style="left:50px;top:1104px;color:#000;font-size:11px;">View</div><div class="t" style="left:94px;top:1104px;color:#000;font-size:11px;">Marker</div><div class="t" style="left:149px;top:1104px;color:#000;font-size:11px;">Frame</div><div class="t" style="left:201px;top:1104px;color:#000;font-size:11px;">Playback</div><div style="left:259px;top:1100px;width:20px;height:19px;box-sizing:border-box;border:1px solid #191919;border-radius:5px 0px 0px 5px;background:linear-gradient(#b0b0b0,#898989);"></div><svg style="position:absolute;left:262px;top:1102px;" width="15" height="15" viewBox="0 0 15 15"><circle cx="7.5" cy="7.5" r="6.5" fill="#eee" stroke="#222" stroke-width="1"/><path d="M7.5 7.5 V1.5 A6 6 0 0 1 13.5 7.5 Z" fill="#f0a020"/><path d="M7.5 7.5 L5 10" stroke="#c02020" stroke-width="1.2"/></svg><div style="left:278px;top:1100px;width:20px;height:19px;box-sizing:border-box;border:1px solid #191919;border-radius:0px 5px 5px 0px;background:linear-gradient(#b0b0b0,#898989);"></div><svg style="position:absolute;left:282px;top:1102px;" width="13" height="15" viewBox="0 0 13 15"><path d="M3.5 7 V4.5 C3.5 1.5 9.5 1.5 9.5 4.5 V7" fill="none" stroke="#111" stroke-width="2.2"/><path d="M3.5 7 V4.5 C3.5 1.5 9.5 1.5 9.5 4.5 V7" fill="none" stroke="#eee" stroke-width="1"/><rect x="1.5" y="7" width="10" height="7" fill="#f0f0f0" stroke="#111" stroke-width="1"/></svg><div style="left:305px;top:1100px;width:116px;height:19px;box-sizing:border-box;border:1px solid #191919;border-radius:9px 0px 0px 9px;background:linear-gradient(#a2a2a2,#b8b8b8);"></div><svg style="position:absolute;left:313px;top:1106px;" width="5" height="8" viewBox="0 0 5 8"><path d="M4 0.5 L0.5 4 L4 7.5 Z" fill="#7a7a7a"/></svg><div class="t" style="left:320px;top:1104px;color:#000;font-size:11px;">Start:</div><div class="t" style="right:1497px;top:1104px;color:#000;font-size:11px;">1</div><svg style="position:absolute;left:410px;top:1106px;" width="5" height="8" viewBox="0 0 5 8"><path d="M1 0.5 L4.5 4 L1 7.5 Z" fill="#7a7a7a"/></svg><div style="left:420px;top:1100px;width:112px;height:19px;box-sizing:border-box;border:1px solid #191919;border-radius:0px 9px 9px 0px;background:linear-gradient(#a2a2a2,#b8b8b8);"></div><svg style="position:absolute;left:428px;top:1106px;" width="5" height="8" viewBox="0 0 5 8"><path d="M4 0.5 L0.5 4 L4 7.5 Z" fill="#7a7a7a"/></svg><div class="t" style="left:436px;top:1104px;color:#000;font-size:11px;">End:</div><div class="t" style="right:1386px;top:1104px;color:#000;font-size:11px;">250</div><svg style="position:absolute;left:521px;top:1106px;" width="5" height="8" viewBox="0 0 5 8"><path d="M1 0.5 L4.5 4 L1 7.5 Z" fill="#7a7a7a"/></svg><div style="left:537px;top:1100px;width:90px;height:19px;box-sizing:border-box;border:1px solid #191919;border-radius:9px 9px 9px 9px;background:linear-gradient(#a2a2a2,#b8b8b8);"></div><svg style="position:absolute;left:545px;top:1106px;" width="5" height="8" viewBox="0 0 5 8"><path d="M4 0.5 L0.5 4 L4 7.5 Z" fill="#7a7a7a"/></svg><div class="t" style="right:1290px;top:1104px;color:#000;font-size:11px;">0</div><svg style="position:absolute;left:616px;top:1106px;" width="5" height="8" viewBox="0 0 5 8"><path d="M1 0.5 L4.5 4 L1 7.5 Z" fill="#7a7a7a"/></svg><div style="left:643px;top:1100px;width:119px;height:19px;box-sizing:border-box;border:1px solid #191919;border-radius:5px 5px 5px 5px;background:linear-gradient(#b0b0b0,#898989);"></div><div style="left:663px;top:1101px;width:1px;height:17px;background:#333;"></div><div style="left:683px;top:1101px;width:1px;height:17px;background:#333;"></div><div style="left:702px;top:1101px;width:1px;height:17px;background:#333;"></div><div style="left:722px;top:1101px;width:1px;height:17px;background:#333;"></div><div style="left:742px;top:1101px;width:1px;height:17px;background:#333;"></div><svg style="position:absolute;left:646px;top:1103px;" width="14" height="14" viewBox="0 0 14 14"><path d="M2 2 V12 M12 2 L6 7 L12 12 M7 2 L2.5 7 L7 12" fill="none" stroke="#111" stroke-width="2.4"/><path d="M2 2 V12 M12 2 L6 7 L12 12 M7 2 L2.5 7 L7 12" fill="none" stroke="#fff" stroke-width="1"/></svg><svg style="position:absolute;left:666px;top:1103px;" width="14" height="14" viewBox="0 0 14 14"><path d="M12 2 L7 7 L12 12 M7 2 L2 7 L7 12" fill="none" stroke="#111" stroke-width="2.4"/><path d="M12 2 L7 7 L12 12 M7 2 L2 7 L7 12" fill="none" stroke="#fff" stroke-width="1"/></svg><svg style="position:absolute;left:686px;top:1103px;" width="14" height="14" viewBox="0 0 14 14"><path d="M11 1.5 L3 7 L11 12.5 Z" fill="#eee" stroke="#111" stroke-width="1"/></svg><svg style="position:absolute;left:705px;top:1103px;" width="14" height="14" viewBox="0 0 14 14"><path d="M3 1.5 L11 7 L3 12.5 Z" fill="#eee" stroke="#111" stroke-width="1"/></svg><svg style="position:absolute;left:725px;top:1103px;" width="14" height="14" viewBox="0 0 14 14"><path d="M2 2 L7 7 L2 12 M7 2 L12 7 L7 12" fill="none" stroke="#111" stroke-width="2.4"/><path d="M2 2 L7 7 L2 12 M7 2 L12 7 L7 12" fill="none" stroke="#fff" stroke-width="1"/></svg><svg style="position:absolute;left:745px;top:1103px;" width="14" height="14" viewBox="0 0 14 14"><path d="M12 2 V12 M2 2 L8 7 L2 12 M7 2 L11.5 7 L7 12" fill="none" stroke="#111" stroke-width="2.4"/><path d="M12 2 V12 M2 2 L8 7 L2 12 M7 2 L11.5 7 L7 12" fill="none" stroke="#fff" stroke-width="1"/></svg><div style="left:768px;top:1100px;width:115px;height:19px;box-sizing:border-box;border:1px solid #111;border-radius:5px 5px 5px 5px;background:linear-gradient(#555555,#383838);"></div><div class="t" style="left:776px;top:1104px;color:#fff;font-size:11px;">No Sync</div><svg style="position:absolute;left:872px;top:1103px;" width="7" height="12" viewBox="0 0 7 12"><path d="M0.5 5 L3.5 0.5 L6.5 5 Z M0.5 7 L3.5 11.5 L6.5 7 Z" fill="#cfcfcf"/></svg><div style="left:899px;top:1100px;width:19px;height:19px;box-sizing:border-box;border:1px solid #191919;border-radius:5px 5px 5px 5px;background:linear-gradient(#b0b0b0,#898989);"></div><svg style="position:absolute;left:902px;top:1103px;" width="13" height="13" viewBox="0 0 13 13"><circle cx="6.5" cy="6.5" r="5" fill="#e83010" stroke="#611" stroke-width="0.8"/></svg><div style="left:924px;top:1100px;width:131px;height:19px;box-sizing:border-box;border:1px solid #191919;border-radius:5px 0px 0px 5px;background:linear-gradient(#a0a0a0,#b4b4b4);"></div><svg style="position:absolute;left:928px;top:1102px;" width="16" height="16" viewBox="0 0 16 16"><path d="M4 1 V12" stroke="#111" stroke-width="3"/><path d="M4 1 V12 M4 2 H6" stroke="#e8e070" stroke-width="1.4"/><circle cx="4.5" cy="12" r="2.5" fill="none" stroke="#111" stroke-width="2.4"/><circle cx="4.5" cy="12" r="2.5" fill="none" stroke="#e8e070" stroke-width="1.2"/><path d="M7 11 L14 6" stroke="#111" stroke-width="2.4"/><path d="M7 11 L14 6" stroke="#eee" stroke-width="1"/></svg><div style="left:1054px;top:1100px;width:21px;height:19px;box-sizing:border-box;border:1px solid #191919;border-radius:0px 0px 0px 0px;background:linear-gradient(#b0b0b0,#898989);"></div><svg style="position:absolute;left:1057px;top:1102px;" width="15" height="15" viewBox="0 0 15 15"><circle cx="4" cy="11" r="2.5" fill="none" stroke="#111" stroke-width="2.4"/><circle cx="4" cy="11" r="2.5" fill="none" stroke="#eee" stroke-width="1"/><path d="M6 9 L13 2" stroke="#111" stroke-width="2.4"/><path d="M6 9 L13 2" stroke="#eee" stroke-width="1"/></svg><div style="left:1074px;top:1100px;width:21px;height:19px;box-sizing:border-box;border:1px solid #191919;border-radius:0px 5px 5px 0px;background:linear-gradient(#b0b0b0,#898989);"></div><svg style="position:absolute;left:1077px;top:1102px;" width="15" height="15" viewBox="0 0 15 15"><circle cx="4" cy="11" r="2.5" fill="none" stroke="#111" stroke-width="2.4"/><circle cx="4" cy="11" r="2.5" fill="none" stroke="#eee" stroke-width="1"/><path d="M6 9 L13 2" stroke="#111" stroke-width="2.4"/><path d="M6 9 L13 2" stroke="#eee" stroke-width="1"/><path d="M2 2 L13 13 M13 2 L2 13" stroke="#e02020" stroke-width="1.5"/></svg><svg style="position:absolute;left:1889px;top:2px;" width="13" height="13" viewBox="0 0 13 13"><path d="M0.5 0.5 L12 12" stroke="#d0d0d0" stroke-width="1.1"/><path d="M1.5 0.5 L12 11" stroke="#111" stroke-width="1.1"/><path d="M4.5 0.5 L12 8" stroke="#d0d0d0" stroke-width="1.1"/><path d="M5.5 0.5 L12 7" stroke="#111" stroke-width="1.1"/><path d="M8.5 0.5 L12 4" stroke="#d0d0d0" stroke-width="1.1"/><path d="M9.5 0.5 L12 3" stroke="#111" stroke-width="1.1"/></svg><svg style="position:absolute;left:0px;top:14px;" width="13" height="13" viewBox="0 0 13 13"><path d="M0 0.5 L11.5 12" stroke="#d0d0d0" stroke-width="1.1"/><path d="M0 1.5 L10.5 12" stroke="#111" stroke-width="1.1"/><path d="M0 4.5 L7.5 12" stroke="#d0d0d0" stroke-width="1.1"/><path d="M0 5.5 L6.5 12" stroke="#111" stroke-width="1.1"/><path d="M0 8.5 L3.5 12" stroke="#d0d0d0" stroke-width="1.1"/><path d="M0 9.5 L2.5 12" stroke="#111" stroke-width="1.1"/></svg><svg style="position:absolute;left:1536px;top:29px;" width="13" height="13" viewBox="0 0 13 13"><path d="M0.5 0.5 L12 12" stroke="#d0d0d0" stroke-width="1.1"/><path d="M1.5 0.5 L12 11" stroke="#111" stroke-width="1.1"/><path d="M4.5 0.5 L12 8" stroke="#d0d0d0" stroke-width="1.1"/><path d="M5.5 0.5 L12 7" stroke="#111" stroke-width="1.1"/><path d="M8.5 0.5 L12 4" stroke="#d0d0d0" stroke-width="1.1"/><path d="M9.5 0.5 L12 3" stroke="#111" stroke-width="1.1"/></svg><svg style="position:absolute;left:0px;top:1006px;" width="13" height="13" viewBox="0 0 13 13"><path d="M0 0.5 L11.5 12" stroke="#d0d0d0" stroke-width="1.1"/><path d="M0 1.5 L10.5 12" stroke="#111" stroke-width="1.1"/><path d="M0 4.5 L7.5 12" stroke="#d0d0d0" stroke-width="1.1"/><path d="M0 5.5 L6.5 12" stroke="#111" stroke-width="1.1"/><path d="M0 8.5 L3.5 12" stroke="#d0d0d0" stroke-width="1.1"/><path d="M0 9.5 L2.5 12" stroke="#111" stroke-width="1.1"/></svg><svg style="position:absolute;left:1536px;top:1021px;" width="13" height="13" viewBox="0 0 13 13"><path d="M0.5 0.5 L12 12" stroke="#d0d0d0" stroke-width="1.1"/><path d="M1.5 0.5 L12 11" stroke="#111" stroke-width="1.1"/><path d="M4.5 0.5 L12 8" stroke="#d0d0d0" stroke-width="1.1"/><path d="M5.5 0.5 L12 7" stroke="#111" stroke-width="1.1"/><path d="M8.5 0.5 L12 4" stroke="#d0d0d0" stroke-width="1.1"/><path d="M9.5 0.5 L12 3" stroke="#111" stroke-width="1.1"/></svg><svg style="position:absolute;left:0px;top:1107px;" width="13" height="13" viewBox="0 0 13 13"><path d="M0 0.5 L11.5 12" stroke="#d0d0d0" stroke-width="1.1"/><path d="M0 1.5 L10.5 12" stroke="#111" stroke-width="1.1"/><path d="M0 4.5 L7.5 12" stroke="#d0d0d0" stroke-width="1.1"/><path d="M0 5.5 L6.5 12" stroke="#111" stroke-width="1.1"/><path d="M0 8.5 L3.5 12" stroke="#d0d0d0" stroke-width="1.1"/><path d="M0 9.5 L2.5 12" stroke="#111" stroke-width="1.1"/></svg><svg style="position:absolute;left:1889px;top:29px;" width="13" height="13" viewBox="0 0 13 13"><path d="M0.5 0.5 L12 12" stroke="#d0d0d0" stroke-width="1.1"/><path d="M1.5 0.5 L12 11" stroke="#111" stroke-width="1.1"/><path d="M4.5 0.5 L12 8" stroke="#d0d0d0" stroke-width="1.1"/><path d="M5.5 0.5 L12 7" stroke="#111" stroke-width="1.1"/><path d="M8.5 0.5 L12 4" stroke="#d0d0d0" stroke-width="1.1"/><path d="M9.5 0.5 L12 3" stroke="#111" stroke-width="1.1"/></svg><svg style="position:absolute;left:1552px;top:206px;" width="13" height="13" viewBox="0 0 13 13"><path d="M0 0.5 L11.5 12" stroke="#d0d0d0" stroke-width="1.1"/><path d="M0 1.5 L10.5 12" stroke="#111" stroke-width="1.1"/><path d="M0 4.5 L7.5 12" stroke="#d0d0d0" stroke-width="1.1"/><path d="M0 5.5 L6.5 12" stroke="#111" stroke-width="1.1"/><path d="M0 8.5 L3.5 12" stroke="#d0d0d0" stroke-width="1.1"/><path d="M0 9.5 L2.5 12" stroke="#111" stroke-width="1.1"/></svg><svg style="position:absolute;left:1889px;top:221px;" width="13" height="13" viewBox="0 0 13 13"><path d="M0.5 0.5 L12 12" stroke="#d0d0d0" stroke-width="1.1"/><path d="M1.5 0.5 L12 11" stroke="#111" stroke-width="1.1"/><path d="M4.5 0.5 L12 8" stroke="#d0d0d0" stroke-width="1.1"/><path d="M5.5 0.5 L12 7" stroke="#111" stroke-width="1.1"/><path d="M8.5 0.5 L12 4" stroke="#d0d0d0" stroke-width="1.1"/><path d="M9.5 0.5 L12 3" stroke="#111" stroke-width="1.1"/></svg><svg style="position:absolute;left:1552px;top:1107px;" width="13" height="13" viewBox="0 0 13 13"><path d="M0 0.5 L11.5 12" stroke="#d0d0d0" stroke-width="1.1"/><path d="M0 1.5 L10.5 12" stroke="#111" stroke-width="1.1"/><path d="M0 4.5 L7.5 12" stroke="#d0d0d0" stroke-width="1.1"/><path d="M0 5.5 L6.5 12" stroke="#111" stroke-width="1.1"/><path d="M0 8.5 L3.5 12" stroke="#d0d0d0" stroke-width="1.1"/><path d="M0 9.5 L2.5 12" stroke="#111" stroke-width="1.1"/></svg></body></html>
